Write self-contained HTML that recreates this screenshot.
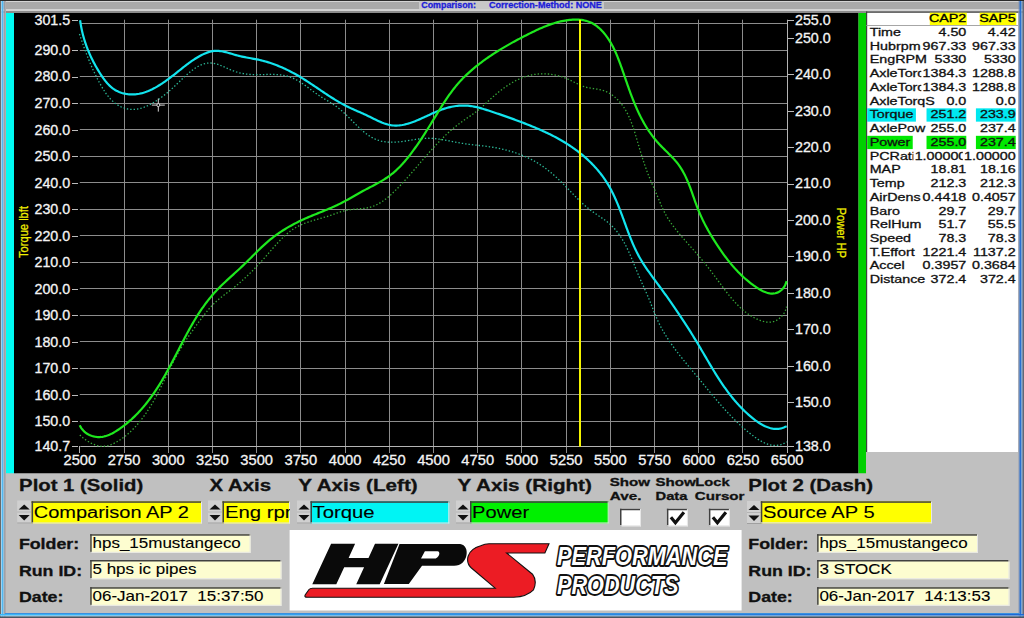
<!DOCTYPE html><html><head><meta charset="utf-8"><style>html,body{margin:0;padding:0;background:#c0c0c0;overflow:hidden}svg{display:block;font-family:"Liberation Sans",sans-serif}</style></head><body>
<svg width="1024" height="618" viewBox="0 0 1024 618">
<rect x="0" y="0" width="1024" height="618" fill="#c0c0c0"/>
<rect x="0" y="0" width="1024" height="1" fill="#2a2a2a"/>
<rect x="0" y="1" width="1024" height="1" fill="#d4d4d4"/>
<rect x="0" y="2" width="1024" height="7" fill="#a9a9a9"/>
<rect x="0" y="9" width="1024" height="2" fill="#d2d2d2"/>
<rect x="0" y="11" width="1024" height="2" fill="#8c8c8c"/>
<rect x="419" y="1" width="185" height="8" fill="#c8c8c8"/>
<text transform="translate(421.30,7.90) scale(0.9856,1)" font-size="9" font-weight="bold" fill="#1c1cd8" stroke="#1c1cd8" stroke-width="0.3" text-anchor="start">Comparison:</text>
<text transform="translate(489.00,7.90) scale(1.0090,1)" font-size="9" font-weight="bold" fill="#1c1cd8" stroke="#1c1cd8" stroke-width="0.3" text-anchor="start">Correction-Method: NONE</text>
<defs><linearGradient id="bb" x1="0" x2="1" y1="0" y2="0"><stop offset="0" stop-color="#3cb8f8"/><stop offset="1" stop-color="#1e68d4"/></linearGradient><linearGradient id="bl" x1="0" x2="1" y1="0" y2="0"><stop offset="0" stop-color="#8cd8ff"/><stop offset="1" stop-color="#6aa8e8"/></linearGradient></defs>
<rect x="0" y="0" width="1" height="618" fill="#6a6a6a"/>
<rect x="1" y="0" width="0.8" height="618" fill="#a8e0ff"/>
<rect x="1.8" y="0" width="1.4" height="618" fill="#50b8f2"/>
<rect x="3.2" y="0" width="0.6" height="618" fill="#98d4f4"/>
<rect x="3.8" y="0" width="1" height="618" fill="#8898a8"/>
<rect x="4.8" y="0" width="1.2" height="618" fill="#b4aaaa"/>
<rect x="1018.6" y="0" width="0.9" height="618" fill="#8090b0"/>
<rect x="1019.5" y="0" width="2" height="618" fill="#2a70d0"/>
<rect x="1021.5" y="0" width="1" height="618" fill="#80b0e0"/>
<rect x="1022.5" y="0" width="1.5" height="618" fill="#606878"/>
<rect x="5" y="613" width="1014" height="1" fill="#3a90e0"/>
<rect x="0" y="614" width="1024" height="1.5" fill="url(#bb)"/>
<rect x="0" y="615.5" width="1024" height="1" fill="url(#bl)"/>
<rect x="0" y="616.5" width="1024" height="1.5" fill="#4c5560"/>
<rect x="0" y="0" width="1024" height="1" fill="#2a2a2a"/>
<rect x="6" y="13" width="8" height="460.5" fill="#00fcf4"/>
<rect x="14" y="13" width="844.5" height="460.5" fill="#000"/>
<rect x="858.5" y="13" width="7.5" height="460.5" fill="#00d000"/>
<line x1="124.5" y1="19.7" x2="124.5" y2="453" stroke="#8c8c8c" stroke-width="1"/>
<line x1="168.5" y1="19.7" x2="168.5" y2="453" stroke="#8c8c8c" stroke-width="1"/>
<line x1="212.5" y1="19.7" x2="212.5" y2="453" stroke="#8c8c8c" stroke-width="1"/>
<line x1="256.5" y1="19.7" x2="256.5" y2="453" stroke="#8c8c8c" stroke-width="1"/>
<line x1="300.5" y1="19.7" x2="300.5" y2="453" stroke="#8c8c8c" stroke-width="1"/>
<line x1="345.5" y1="19.7" x2="345.5" y2="453" stroke="#8c8c8c" stroke-width="1"/>
<line x1="389.5" y1="19.7" x2="389.5" y2="453" stroke="#8c8c8c" stroke-width="1"/>
<line x1="433.5" y1="19.7" x2="433.5" y2="453" stroke="#8c8c8c" stroke-width="1"/>
<line x1="477.5" y1="19.7" x2="477.5" y2="453" stroke="#8c8c8c" stroke-width="1"/>
<line x1="521.5" y1="19.7" x2="521.5" y2="453" stroke="#8c8c8c" stroke-width="1"/>
<line x1="566.5" y1="19.7" x2="566.5" y2="453" stroke="#8c8c8c" stroke-width="1"/>
<line x1="610.5" y1="19.7" x2="610.5" y2="453" stroke="#8c8c8c" stroke-width="1"/>
<line x1="654.5" y1="19.7" x2="654.5" y2="453" stroke="#8c8c8c" stroke-width="1"/>
<line x1="698.5" y1="19.7" x2="698.5" y2="453" stroke="#8c8c8c" stroke-width="1"/>
<line x1="742.5" y1="19.7" x2="742.5" y2="453" stroke="#8c8c8c" stroke-width="1"/>
<line x1="79.8" y1="421.5" x2="787.2" y2="421.5" stroke="#8c8c8c" stroke-width="1"/>
<line x1="79.8" y1="394.5" x2="787.2" y2="394.5" stroke="#8c8c8c" stroke-width="1"/>
<line x1="79.8" y1="368.5" x2="787.2" y2="368.5" stroke="#8c8c8c" stroke-width="1"/>
<line x1="79.8" y1="341.5" x2="787.2" y2="341.5" stroke="#8c8c8c" stroke-width="1"/>
<line x1="79.8" y1="315.5" x2="787.2" y2="315.5" stroke="#8c8c8c" stroke-width="1"/>
<line x1="79.8" y1="288.5" x2="787.2" y2="288.5" stroke="#8c8c8c" stroke-width="1"/>
<line x1="79.8" y1="262.5" x2="787.2" y2="262.5" stroke="#8c8c8c" stroke-width="1"/>
<line x1="79.8" y1="235.5" x2="787.2" y2="235.5" stroke="#8c8c8c" stroke-width="1"/>
<line x1="79.8" y1="209.5" x2="787.2" y2="209.5" stroke="#8c8c8c" stroke-width="1"/>
<line x1="79.8" y1="182.5" x2="787.2" y2="182.5" stroke="#8c8c8c" stroke-width="1"/>
<line x1="79.8" y1="156.5" x2="787.2" y2="156.5" stroke="#8c8c8c" stroke-width="1"/>
<line x1="79.8" y1="129.5" x2="787.2" y2="129.5" stroke="#8c8c8c" stroke-width="1"/>
<line x1="79.8" y1="103.5" x2="787.2" y2="103.5" stroke="#8c8c8c" stroke-width="1"/>
<line x1="79.8" y1="76.5" x2="787.2" y2="76.5" stroke="#8c8c8c" stroke-width="1"/>
<line x1="79.8" y1="50.5" x2="787.2" y2="50.5" stroke="#8c8c8c" stroke-width="1"/>
<line x1="79.8" y1="23.5" x2="787.2" y2="23.5" stroke="#8c8c8c" stroke-width="1"/>
<line x1="80.3" y1="446.5" x2="787.2" y2="446.5" stroke="#b4b4b4" stroke-width="1"/>
<line x1="79.5" y1="446" x2="79.5" y2="453" stroke="#b4b4b4" stroke-width="1"/>
<line x1="787.5" y1="19.7" x2="787.5" y2="453" stroke="#b4b4b4" stroke-width="1"/>
<line x1="72" y1="20.5" x2="78" y2="20.5" stroke="#bbbbbb" stroke-width="1"/>
<text transform="translate(70.20,24.50) scale(1.0200,1)" font-size="14" fill="#f4f4f4" stroke="#f4f4f4" stroke-width="0.3" text-anchor="end">301.5</text>
<line x1="72" y1="50.5" x2="78" y2="50.5" stroke="#bbbbbb" stroke-width="1"/>
<text transform="translate(70.20,54.98) scale(1.0200,1)" font-size="14" fill="#f4f4f4" stroke="#f4f4f4" stroke-width="0.3" text-anchor="end">290.0</text>
<line x1="72" y1="77.5" x2="78" y2="77.5" stroke="#bbbbbb" stroke-width="1"/>
<text transform="translate(70.20,81.49) scale(1.0200,1)" font-size="14" fill="#f4f4f4" stroke="#f4f4f4" stroke-width="0.3" text-anchor="end">280.0</text>
<line x1="72" y1="103.5" x2="78" y2="103.5" stroke="#bbbbbb" stroke-width="1"/>
<text transform="translate(70.20,107.99) scale(1.0200,1)" font-size="14" fill="#f4f4f4" stroke="#f4f4f4" stroke-width="0.3" text-anchor="end">270.0</text>
<line x1="72" y1="130.5" x2="78" y2="130.5" stroke="#bbbbbb" stroke-width="1"/>
<text transform="translate(70.20,134.50) scale(1.0200,1)" font-size="14" fill="#f4f4f4" stroke="#f4f4f4" stroke-width="0.3" text-anchor="end">260.0</text>
<line x1="72" y1="156.5" x2="78" y2="156.5" stroke="#bbbbbb" stroke-width="1"/>
<text transform="translate(70.20,161.00) scale(1.0200,1)" font-size="14" fill="#f4f4f4" stroke="#f4f4f4" stroke-width="0.3" text-anchor="end">250.0</text>
<line x1="72" y1="183.5" x2="78" y2="183.5" stroke="#bbbbbb" stroke-width="1"/>
<text transform="translate(70.20,187.51) scale(1.0200,1)" font-size="14" fill="#f4f4f4" stroke="#f4f4f4" stroke-width="0.3" text-anchor="end">240.0</text>
<line x1="72" y1="209.5" x2="78" y2="209.5" stroke="#bbbbbb" stroke-width="1"/>
<text transform="translate(70.20,214.01) scale(1.0200,1)" font-size="14" fill="#f4f4f4" stroke="#f4f4f4" stroke-width="0.3" text-anchor="end">230.0</text>
<line x1="72" y1="236.5" x2="78" y2="236.5" stroke="#bbbbbb" stroke-width="1"/>
<text transform="translate(70.20,240.52) scale(1.0200,1)" font-size="14" fill="#f4f4f4" stroke="#f4f4f4" stroke-width="0.3" text-anchor="end">220.0</text>
<line x1="72" y1="262.5" x2="78" y2="262.5" stroke="#bbbbbb" stroke-width="1"/>
<text transform="translate(70.20,267.02) scale(1.0200,1)" font-size="14" fill="#f4f4f4" stroke="#f4f4f4" stroke-width="0.3" text-anchor="end">210.0</text>
<line x1="72" y1="289.5" x2="78" y2="289.5" stroke="#bbbbbb" stroke-width="1"/>
<text transform="translate(70.20,293.53) scale(1.0200,1)" font-size="14" fill="#f4f4f4" stroke="#f4f4f4" stroke-width="0.3" text-anchor="end">200.0</text>
<line x1="72" y1="315.5" x2="78" y2="315.5" stroke="#bbbbbb" stroke-width="1"/>
<text transform="translate(70.20,320.03) scale(1.0200,1)" font-size="14" fill="#f4f4f4" stroke="#f4f4f4" stroke-width="0.3" text-anchor="end">190.0</text>
<line x1="72" y1="342.5" x2="78" y2="342.5" stroke="#bbbbbb" stroke-width="1"/>
<text transform="translate(70.20,346.54) scale(1.0200,1)" font-size="14" fill="#f4f4f4" stroke="#f4f4f4" stroke-width="0.3" text-anchor="end">180.0</text>
<line x1="72" y1="368.5" x2="78" y2="368.5" stroke="#bbbbbb" stroke-width="1"/>
<text transform="translate(70.20,373.04) scale(1.0200,1)" font-size="14" fill="#f4f4f4" stroke="#f4f4f4" stroke-width="0.3" text-anchor="end">170.0</text>
<line x1="72" y1="395.5" x2="78" y2="395.5" stroke="#bbbbbb" stroke-width="1"/>
<text transform="translate(70.20,399.55) scale(1.0200,1)" font-size="14" fill="#f4f4f4" stroke="#f4f4f4" stroke-width="0.3" text-anchor="end">160.0</text>
<line x1="72" y1="421.5" x2="78" y2="421.5" stroke="#bbbbbb" stroke-width="1"/>
<text transform="translate(70.20,426.05) scale(1.0200,1)" font-size="14" fill="#f4f4f4" stroke="#f4f4f4" stroke-width="0.3" text-anchor="end">150.0</text>
<line x1="72" y1="446.5" x2="78" y2="446.5" stroke="#bbbbbb" stroke-width="1"/>
<text transform="translate(70.20,450.70) scale(1.0200,1)" font-size="14" fill="#f4f4f4" stroke="#f4f4f4" stroke-width="0.3" text-anchor="end">140.7</text>
<line x1="788" y1="20.5" x2="794" y2="20.5" stroke="#bbbbbb" stroke-width="1"/>
<text transform="translate(795.00,24.50) scale(1.0200,1)" font-size="14" fill="#f4f4f4" stroke="#f4f4f4" stroke-width="0.3" text-anchor="start">255.0</text>
<line x1="788" y1="38.5" x2="794" y2="38.5" stroke="#bbbbbb" stroke-width="1"/>
<text transform="translate(795.00,42.71) scale(1.0200,1)" font-size="14" fill="#f4f4f4" stroke="#f4f4f4" stroke-width="0.3" text-anchor="start">250.0</text>
<line x1="788" y1="74.5" x2="794" y2="74.5" stroke="#bbbbbb" stroke-width="1"/>
<text transform="translate(795.00,79.14) scale(1.0200,1)" font-size="14" fill="#f4f4f4" stroke="#f4f4f4" stroke-width="0.3" text-anchor="start">240.0</text>
<line x1="788" y1="111.5" x2="794" y2="111.5" stroke="#bbbbbb" stroke-width="1"/>
<text transform="translate(795.00,115.57) scale(1.0200,1)" font-size="14" fill="#f4f4f4" stroke="#f4f4f4" stroke-width="0.3" text-anchor="start">230.0</text>
<line x1="788" y1="147.5" x2="794" y2="147.5" stroke="#bbbbbb" stroke-width="1"/>
<text transform="translate(795.00,152.00) scale(1.0200,1)" font-size="14" fill="#f4f4f4" stroke="#f4f4f4" stroke-width="0.3" text-anchor="start">220.0</text>
<line x1="788" y1="184.5" x2="794" y2="184.5" stroke="#bbbbbb" stroke-width="1"/>
<text transform="translate(795.00,188.42) scale(1.0200,1)" font-size="14" fill="#f4f4f4" stroke="#f4f4f4" stroke-width="0.3" text-anchor="start">210.0</text>
<line x1="788" y1="220.5" x2="794" y2="220.5" stroke="#bbbbbb" stroke-width="1"/>
<text transform="translate(795.00,224.85) scale(1.0200,1)" font-size="14" fill="#f4f4f4" stroke="#f4f4f4" stroke-width="0.3" text-anchor="start">200.0</text>
<line x1="788" y1="256.5" x2="794" y2="256.5" stroke="#bbbbbb" stroke-width="1"/>
<text transform="translate(795.00,261.28) scale(1.0200,1)" font-size="14" fill="#f4f4f4" stroke="#f4f4f4" stroke-width="0.3" text-anchor="start">190.0</text>
<line x1="788" y1="293.5" x2="794" y2="293.5" stroke="#bbbbbb" stroke-width="1"/>
<text transform="translate(795.00,297.71) scale(1.0200,1)" font-size="14" fill="#f4f4f4" stroke="#f4f4f4" stroke-width="0.3" text-anchor="start">180.0</text>
<line x1="788" y1="329.5" x2="794" y2="329.5" stroke="#bbbbbb" stroke-width="1"/>
<text transform="translate(795.00,334.13) scale(1.0200,1)" font-size="14" fill="#f4f4f4" stroke="#f4f4f4" stroke-width="0.3" text-anchor="start">170.0</text>
<line x1="788" y1="366.5" x2="794" y2="366.5" stroke="#bbbbbb" stroke-width="1"/>
<text transform="translate(795.00,370.56) scale(1.0200,1)" font-size="14" fill="#f4f4f4" stroke="#f4f4f4" stroke-width="0.3" text-anchor="start">160.0</text>
<line x1="788" y1="402.5" x2="794" y2="402.5" stroke="#bbbbbb" stroke-width="1"/>
<text transform="translate(795.00,406.99) scale(1.0200,1)" font-size="14" fill="#f4f4f4" stroke="#f4f4f4" stroke-width="0.3" text-anchor="start">150.0</text>
<line x1="788" y1="446.5" x2="794" y2="446.5" stroke="#bbbbbb" stroke-width="1"/>
<text transform="translate(795.00,450.70) scale(1.0200,1)" font-size="14" fill="#f4f4f4" stroke="#f4f4f4" stroke-width="0.3" text-anchor="start">138.0</text>
<text transform="translate(79.80,464.70) scale(1.0500,1)" font-size="14" fill="#f4f4f4" stroke="#f4f4f4" stroke-width="0.3" text-anchor="middle">2500</text>
<text transform="translate(124.01,464.70) scale(1.0500,1)" font-size="14" fill="#f4f4f4" stroke="#f4f4f4" stroke-width="0.3" text-anchor="middle">2750</text>
<text transform="translate(168.23,464.70) scale(1.0500,1)" font-size="14" fill="#f4f4f4" stroke="#f4f4f4" stroke-width="0.3" text-anchor="middle">3000</text>
<text transform="translate(212.44,464.70) scale(1.0500,1)" font-size="14" fill="#f4f4f4" stroke="#f4f4f4" stroke-width="0.3" text-anchor="middle">3250</text>
<text transform="translate(256.65,464.70) scale(1.0500,1)" font-size="14" fill="#f4f4f4" stroke="#f4f4f4" stroke-width="0.3" text-anchor="middle">3500</text>
<text transform="translate(300.86,464.70) scale(1.0500,1)" font-size="14" fill="#f4f4f4" stroke="#f4f4f4" stroke-width="0.3" text-anchor="middle">3750</text>
<text transform="translate(345.08,464.70) scale(1.0500,1)" font-size="14" fill="#f4f4f4" stroke="#f4f4f4" stroke-width="0.3" text-anchor="middle">4000</text>
<text transform="translate(389.29,464.70) scale(1.0500,1)" font-size="14" fill="#f4f4f4" stroke="#f4f4f4" stroke-width="0.3" text-anchor="middle">4250</text>
<text transform="translate(433.50,464.70) scale(1.0500,1)" font-size="14" fill="#f4f4f4" stroke="#f4f4f4" stroke-width="0.3" text-anchor="middle">4500</text>
<text transform="translate(477.71,464.70) scale(1.0500,1)" font-size="14" fill="#f4f4f4" stroke="#f4f4f4" stroke-width="0.3" text-anchor="middle">4750</text>
<text transform="translate(521.93,464.70) scale(1.0500,1)" font-size="14" fill="#f4f4f4" stroke="#f4f4f4" stroke-width="0.3" text-anchor="middle">5000</text>
<text transform="translate(566.14,464.70) scale(1.0500,1)" font-size="14" fill="#f4f4f4" stroke="#f4f4f4" stroke-width="0.3" text-anchor="middle">5250</text>
<text transform="translate(610.35,464.70) scale(1.0500,1)" font-size="14" fill="#f4f4f4" stroke="#f4f4f4" stroke-width="0.3" text-anchor="middle">5500</text>
<text transform="translate(654.56,464.70) scale(1.0500,1)" font-size="14" fill="#f4f4f4" stroke="#f4f4f4" stroke-width="0.3" text-anchor="middle">5750</text>
<text transform="translate(698.78,464.70) scale(1.0500,1)" font-size="14" fill="#f4f4f4" stroke="#f4f4f4" stroke-width="0.3" text-anchor="middle">6000</text>
<text transform="translate(742.99,464.70) scale(1.0500,1)" font-size="14" fill="#f4f4f4" stroke="#f4f4f4" stroke-width="0.3" text-anchor="middle">6250</text>
<text transform="translate(787.20,464.70) scale(1.0500,1)" font-size="14" fill="#f4f4f4" stroke="#f4f4f4" stroke-width="0.3" text-anchor="middle">6500</text>
<text transform="translate(28.2,258) rotate(-90)" font-size="12.5" fill="#eeee00" stroke="#eeee00" stroke-width="0.25" textLength="52" lengthAdjust="spacingAndGlyphs">Torque lbft</text>
<text transform="translate(837.4,207.5) rotate(90)" font-size="12.5" fill="#eeee00" stroke="#eeee00" stroke-width="0.25" textLength="50.5" lengthAdjust="spacingAndGlyphs">Power HP</text>
<path d="M79.45,34.01 L79.94,35.48 L80.43,36.93 L80.93,38.38 L81.42,39.83 L81.91,41.27 L82.41,42.70 L82.91,44.13 L83.41,45.55 L83.91,46.96 L84.42,48.37 L84.93,49.78 L85.44,51.18 L85.96,52.58 L86.49,53.97 L87.02,55.36 L87.55,56.74 L88.09,58.12 L88.64,59.50 L89.20,60.87 L89.76,62.24 L90.33,63.60 L90.91,64.97 L91.50,66.33 L92.09,67.69 L92.70,69.04 L93.31,70.39 L93.94,71.75 L94.57,73.10 L95.22,74.44 L95.88,75.79 L96.55,77.14 L97.23,78.48 L97.93,79.82 L98.63,81.17 L99.36,82.51 L100.09,83.85 L100.84,85.19 L101.61,86.53 L102.39,87.86 L103.19,89.18 L104.01,90.48 L104.86,91.77 L105.73,93.04 L106.62,94.29 L107.53,95.51 L108.48,96.70 L109.45,97.85 L110.46,98.97 L111.50,100.05 L112.57,101.09 L113.67,102.08 L114.81,103.02 L115.99,103.90 L117.21,104.73 L118.47,105.50 L119.78,106.21 L121.11,106.85 L122.48,107.43 L123.88,107.94 L125.30,108.37 L126.74,108.73 L128.19,109.02 L129.65,109.23 L131.12,109.36 L132.59,109.40 L134.06,109.37 L135.53,109.26 L136.99,109.07 L138.44,108.81 L139.90,108.49 L141.34,108.10 L142.78,107.66 L144.20,107.15 L145.62,106.60 L147.03,106.00 L148.42,105.36 L149.80,104.67 L151.17,103.95 L152.52,103.20 L153.85,102.42 L155.17,101.61 L156.47,100.78 L157.75,99.93 L159.01,99.07 L160.25,98.20 L161.47,97.31 L162.67,96.41 L163.85,95.50 L165.02,94.58 L166.18,93.65 L167.32,92.70 L168.45,91.75 L169.57,90.79 L170.68,89.81 L171.78,88.83 L172.88,87.84 L173.96,86.83 L175.05,85.82 L176.12,84.80 L177.20,83.77 L178.27,82.74 L179.34,81.70 L180.42,80.65 L181.50,79.61 L182.59,78.56 L183.69,77.52 L184.80,76.48 L185.92,75.45 L187.06,74.43 L188.23,73.42 L189.41,72.42 L190.62,71.45 L191.85,70.49 L193.11,69.57 L194.39,68.67 L195.68,67.82 L197.00,67.02 L198.33,66.27 L199.68,65.58 L201.04,64.95 L202.41,64.40 L203.79,63.93 L205.18,63.55 L206.58,63.26 L207.98,63.06 L209.39,62.98 L210.80,63.00 L212.21,63.12 L213.62,63.34 L215.04,63.63 L216.46,64.01 L217.88,64.45 L219.30,64.94 L220.72,65.48 L222.14,66.06 L223.56,66.67 L224.99,67.30 L226.41,67.94 L227.83,68.58 L229.26,69.21 L230.69,69.83 L232.11,70.42 L233.53,70.98 L234.96,71.49 L236.38,71.96 L237.81,72.38 L239.24,72.76 L240.66,73.10 L242.10,73.41 L243.53,73.67 L244.97,73.90 L246.42,74.10 L247.87,74.26 L249.32,74.39 L250.79,74.50 L252.26,74.57 L253.74,74.63 L255.22,74.65 L256.72,74.66 L258.22,74.66 L259.73,74.64 L261.24,74.61 L262.75,74.57 L264.27,74.54 L265.79,74.50 L267.31,74.47 L268.82,74.44 L270.34,74.43 L271.85,74.43 L273.36,74.45 L274.87,74.49 L276.37,74.55 L277.86,74.65 L279.34,74.77 L280.82,74.93 L282.28,75.13 L283.74,75.37 L285.18,75.65 L286.61,75.98 L288.03,76.37 L289.43,76.81 L290.81,77.30 L292.18,77.85 L293.54,78.45 L294.89,79.10 L296.22,79.79 L297.54,80.53 L298.84,81.29 L300.14,82.09 L301.43,82.92 L302.71,83.77 L303.99,84.65 L305.26,85.54 L306.52,86.45 L307.77,87.36 L309.03,88.28 L310.27,89.21 L311.52,90.13 L312.77,91.06 L314.01,91.97 L315.25,92.87 L316.50,93.75 L317.74,94.62 L318.99,95.46 L320.24,96.28 L321.49,97.08 L322.75,97.87 L324.00,98.64 L325.25,99.40 L326.50,100.15 L327.75,100.91 L328.99,101.66 L330.23,102.43 L331.46,103.20 L332.68,103.98 L333.90,104.78 L335.11,105.60 L336.31,106.45 L337.49,107.32 L338.67,108.23 L339.83,109.16 L340.99,110.13 L342.13,111.13 L343.27,112.14 L344.39,113.18 L345.51,114.24 L346.63,115.31 L347.74,116.40 L348.85,117.50 L349.95,118.60 L351.06,119.71 L352.16,120.82 L353.26,121.93 L354.37,123.04 L355.47,124.14 L356.58,125.23 L357.70,126.31 L358.82,127.38 L359.95,128.43 L361.08,129.46 L362.23,130.47 L363.38,131.45 L364.55,132.41 L365.72,133.33 L366.91,134.22 L368.12,135.07 L369.34,135.89 L370.57,136.66 L371.82,137.39 L373.09,138.08 L374.38,138.71 L375.68,139.29 L377.01,139.82 L378.36,140.28 L379.73,140.69 L381.13,141.05 L382.54,141.35 L383.96,141.60 L385.41,141.81 L386.86,141.97 L388.33,142.08 L389.81,142.16 L391.31,142.19 L392.81,142.19 L394.31,142.16 L395.83,142.09 L397.34,141.99 L398.86,141.87 L400.38,141.72 L401.90,141.55 L403.42,141.36 L404.94,141.15 L406.45,140.93 L407.96,140.69 L409.46,140.45 L410.96,140.20 L412.45,139.95 L413.94,139.70 L415.43,139.46 L416.91,139.23 L418.39,139.01 L419.87,138.82 L421.35,138.64 L422.83,138.50 L424.31,138.38 L425.79,138.31 L427.26,138.27 L428.74,138.27 L430.22,138.30 L431.71,138.37 L433.19,138.47 L434.67,138.60 L436.16,138.75 L437.64,138.93 L439.13,139.14 L440.61,139.36 L442.10,139.60 L443.59,139.85 L445.07,140.12 L446.56,140.40 L448.05,140.68 L449.54,140.97 L451.03,141.27 L452.52,141.57 L454.01,141.86 L455.50,142.15 L456.99,142.44 L458.48,142.72 L459.97,142.98 L461.46,143.24 L462.95,143.48 L464.44,143.71 L465.93,143.92 L467.42,144.12 L468.91,144.31 L470.40,144.49 L471.89,144.66 L473.38,144.83 L474.87,145.00 L476.36,145.16 L477.85,145.32 L479.34,145.48 L480.82,145.65 L482.31,145.82 L483.80,145.99 L485.29,146.17 L486.77,146.36 L488.26,146.57 L489.74,146.78 L491.23,147.00 L492.71,147.24 L494.19,147.49 L495.67,147.76 L497.15,148.04 L498.63,148.33 L500.10,148.63 L501.58,148.96 L503.04,149.29 L504.51,149.64 L505.97,150.01 L507.42,150.39 L508.88,150.78 L510.32,151.20 L511.76,151.62 L513.20,152.07 L514.63,152.53 L516.06,153.00 L517.47,153.50 L518.88,154.01 L520.29,154.54 L521.69,155.08 L523.08,155.65 L524.46,156.23 L525.83,156.83 L527.19,157.45 L528.55,158.08 L529.90,158.74 L531.23,159.42 L532.56,160.11 L533.88,160.82 L535.18,161.56 L536.48,162.31 L537.76,163.09 L539.04,163.88 L540.30,164.70 L541.55,165.53 L542.79,166.38 L544.02,167.25 L545.23,168.14 L546.44,169.05 L547.64,169.97 L548.82,170.90 L550.00,171.85 L551.16,172.81 L552.32,173.79 L553.47,174.77 L554.61,175.77 L555.73,176.78 L556.85,177.80 L557.96,178.83 L559.06,179.87 L560.15,180.91 L561.24,181.96 L562.31,183.02 L563.38,184.09 L564.44,185.15 L565.49,186.23 L566.54,187.30 L567.58,188.38 L568.62,189.46 L569.65,190.54 L570.69,191.62 L571.72,192.70 L572.75,193.77 L573.79,194.84 L574.83,195.91 L575.87,196.98 L576.91,198.03 L577.96,199.08 L579.02,200.13 L580.09,201.16 L581.16,202.19 L582.25,203.20 L583.35,204.20 L584.46,205.20 L585.58,206.17 L586.71,207.14 L587.87,208.09 L589.03,209.02 L590.22,209.94 L591.42,210.84 L592.65,211.72 L593.88,212.59 L595.13,213.44 L596.39,214.29 L597.65,215.14 L598.91,215.98 L600.18,216.82 L601.43,217.67 L602.68,218.53 L603.92,219.39 L605.14,220.27 L606.34,221.17 L607.52,222.08 L608.68,223.02 L609.81,223.98 L610.90,224.97 L611.97,225.99 L613.00,227.03 L614.01,228.10 L614.99,229.20 L615.94,230.32 L616.87,231.46 L617.77,232.63 L618.65,233.81 L619.50,235.02 L620.34,236.25 L621.15,237.49 L621.94,238.75 L622.71,240.03 L623.46,241.33 L624.19,242.63 L624.91,243.96 L625.61,245.29 L626.30,246.64 L626.97,248.00 L627.63,249.37 L628.28,250.75 L628.91,252.14 L629.54,253.53 L630.16,254.93 L630.77,256.34 L631.37,257.75 L631.96,259.16 L632.55,260.58 L633.13,262.00 L633.71,263.42 L634.29,264.85 L634.87,266.27 L635.44,267.68 L636.01,269.10 L636.59,270.51 L637.17,271.92 L637.74,273.33 L638.33,274.72 L638.92,276.11 L639.51,277.49 L640.11,278.87 L640.71,280.23 L641.31,281.60 L641.92,282.95 L642.53,284.30 L643.14,285.65 L643.75,287.00 L644.36,288.35 L644.97,289.70 L645.58,291.04 L646.18,292.39 L646.77,293.75 L647.36,295.10 L647.95,296.47 L648.52,297.83 L649.09,299.21 L649.65,300.59 L650.21,301.97 L650.76,303.37 L651.31,304.76 L651.86,306.16 L652.40,307.55 L652.95,308.95 L653.50,310.35 L654.06,311.75 L654.62,313.15 L655.18,314.54 L655.76,315.93 L656.34,317.32 L656.94,318.70 L657.55,320.08 L658.17,321.44 L658.80,322.80 L659.46,324.15 L660.13,325.50 L660.81,326.83 L661.51,328.15 L662.23,329.47 L662.96,330.78 L663.70,332.08 L664.46,333.37 L665.23,334.66 L666.02,335.94 L666.81,337.21 L667.62,338.47 L668.44,339.73 L669.28,340.98 L670.12,342.23 L670.97,343.47 L671.83,344.70 L672.71,345.93 L673.59,347.15 L674.48,348.37 L675.37,349.58 L676.28,350.79 L677.19,351.99 L678.11,353.19 L679.03,354.39 L679.96,355.58 L680.90,356.77 L681.84,357.95 L682.78,359.13 L683.73,360.31 L684.69,361.48 L685.64,362.66 L686.60,363.83 L687.56,365.00 L688.52,366.16 L689.49,367.33 L690.45,368.49 L691.42,369.65 L692.38,370.81 L693.35,371.97 L694.31,373.13 L695.27,374.29 L696.23,375.44 L697.19,376.60 L698.15,377.76 L699.10,378.92 L700.05,380.08 L701.00,381.23 L701.95,382.39 L702.89,383.55 L703.84,384.70 L704.78,385.86 L705.73,387.01 L706.67,388.17 L707.62,389.32 L708.56,390.47 L709.51,391.62 L710.45,392.76 L711.40,393.91 L712.35,395.05 L713.30,396.19 L714.26,397.33 L715.21,398.47 L716.17,399.60 L717.14,400.74 L718.10,401.86 L719.07,402.99 L720.05,404.11 L721.03,405.23 L722.01,406.35 L723.00,407.46 L723.99,408.57 L724.99,409.67 L726.00,410.77 L727.01,411.87 L728.03,412.96 L729.06,414.05 L730.09,415.13 L731.13,416.21 L732.18,417.28 L733.24,418.35 L734.30,419.41 L735.38,420.47 L736.46,421.52 L737.55,422.57 L738.66,423.61 L739.77,424.64 L740.89,425.67 L742.02,426.69 L743.17,427.71 L744.32,428.72 L745.49,429.72 L746.67,430.72 L747.86,431.71 L749.07,432.69 L750.28,433.66 L751.51,434.63 L752.75,435.58 L754.01,436.52 L755.28,437.43 L756.55,438.32 L757.84,439.18 L759.14,440.01 L760.45,440.79 L761.77,441.53 L763.10,442.22 L764.44,442.85 L765.79,443.43 L767.15,443.94 L768.51,444.39 L769.89,444.76 L771.27,445.06 L772.65,445.27 L774.05,445.40 L775.45,445.43 L776.85,445.37 L778.27,445.21 L779.68,444.95 L781.10,444.57 L782.53,444.08 L783.96,443.47 L785.39,442.74 L786.83,441.87" fill="none" stroke="#2cb898" stroke-width="1.3" stroke-dasharray="1.4 2"/>
<path d="M79.80,434.98 L80.74,435.85 L81.76,436.76 L82.86,437.68 L84.04,438.60 L85.27,439.52 L86.57,440.43 L87.91,441.31 L89.30,442.15 L90.73,442.95 L92.18,443.69 L93.66,444.35 L95.15,444.94 L96.65,445.44 L98.15,445.83 L99.65,446.12 L101.13,446.28 L102.61,446.33 L104.06,446.27 L105.51,446.10 L106.94,445.85 L108.35,445.51 L109.75,445.08 L111.13,444.59 L112.50,444.03 L113.85,443.41 L115.18,442.73 L116.49,442.02 L117.78,441.27 L119.06,440.49 L120.31,439.68 L121.55,438.85 L122.77,437.99 L123.97,437.11 L125.15,436.20 L126.31,435.28 L127.46,434.33 L128.59,433.36 L129.70,432.37 L130.79,431.36 L131.87,430.33 L132.93,429.28 L133.98,428.21 L135.01,427.12 L136.02,426.02 L137.02,424.90 L138.00,423.76 L138.97,422.61 L139.93,421.45 L140.87,420.27 L141.79,419.07 L142.71,417.86 L143.61,416.64 L144.49,415.41 L145.36,414.17 L146.23,412.92 L147.07,411.65 L147.91,410.38 L148.74,409.10 L149.55,407.81 L150.35,406.51 L151.14,405.21 L151.92,403.90 L152.69,402.58 L153.45,401.26 L154.20,399.93 L154.94,398.60 L155.68,397.26 L156.40,395.93 L157.11,394.59 L157.82,393.25 L158.51,391.90 L159.20,390.56 L159.88,389.22 L160.56,387.87 L161.23,386.53 L161.89,385.18 L162.55,383.83 L163.21,382.49 L163.86,381.14 L164.52,379.80 L165.16,378.46 L165.81,377.11 L166.46,375.77 L167.11,374.43 L167.75,373.09 L168.40,371.75 L169.05,370.41 L169.70,369.08 L170.36,367.75 L171.02,366.42 L171.68,365.09 L172.35,363.76 L173.03,362.44 L173.71,361.12 L174.40,359.80 L175.09,358.49 L175.80,357.18 L176.51,355.87 L177.23,354.57 L177.96,353.27 L178.70,351.97 L179.46,350.68 L180.22,349.39 L180.99,348.11 L181.77,346.83 L182.56,345.55 L183.36,344.28 L184.16,343.01 L184.98,341.75 L185.80,340.48 L186.63,339.23 L187.46,337.97 L188.30,336.72 L189.15,335.47 L190.01,334.23 L190.87,332.99 L191.74,331.75 L192.61,330.52 L193.48,329.29 L194.36,328.06 L195.25,326.84 L196.14,325.62 L197.03,324.40 L197.93,323.18 L198.83,321.97 L199.73,320.76 L200.63,319.56 L201.54,318.36 L202.45,317.16 L203.36,315.96 L204.28,314.77 L205.20,313.58 L206.12,312.41 L207.06,311.24 L208.01,310.08 L208.97,308.94 L209.95,307.82 L210.94,306.70 L211.95,305.61 L212.99,304.54 L214.04,303.49 L215.12,302.46 L216.22,301.46 L217.34,300.47 L218.48,299.50 L219.64,298.55 L220.81,297.61 L221.99,296.68 L223.18,295.76 L224.38,294.84 L225.58,293.94 L226.79,293.03 L227.99,292.13 L229.20,291.22 L230.40,290.31 L231.59,289.39 L232.78,288.46 L233.96,287.53 L235.12,286.59 L236.28,285.64 L237.44,284.68 L238.58,283.71 L239.72,282.74 L240.84,281.75 L241.96,280.76 L243.08,279.77 L244.18,278.76 L245.28,277.75 L246.38,276.73 L247.46,275.70 L248.54,274.66 L249.62,273.62 L250.69,272.57 L251.75,271.52 L252.80,270.45 L253.85,269.38 L254.90,268.31 L255.94,267.23 L256.98,266.14 L258.01,265.04 L259.03,263.94 L260.06,262.83 L261.07,261.72 L262.09,260.60 L263.10,259.48 L264.11,258.34 L265.11,257.21 L266.11,256.07 L267.11,254.92 L268.10,253.77 L269.10,252.62 L270.09,251.47 L271.08,250.31 L272.08,249.16 L273.08,248.02 L274.08,246.88 L275.09,245.74 L276.10,244.61 L277.12,243.49 L278.15,242.39 L279.18,241.29 L280.22,240.21 L281.28,239.14 L282.34,238.09 L283.42,237.05 L284.50,236.04 L285.61,235.04 L286.72,234.07 L287.85,233.12 L289.00,232.20 L290.16,231.30 L291.34,230.43 L292.55,229.58 L293.77,228.77 L295.01,227.99 L296.27,227.24 L297.56,226.53 L298.87,225.85 L300.20,225.20 L301.55,224.59 L302.92,224.01 L304.31,223.45 L305.71,222.92 L307.13,222.41 L308.56,221.93 L310.01,221.45 L311.46,221.00 L312.92,220.56 L314.39,220.12 L315.86,219.70 L317.33,219.28 L318.81,218.87 L320.28,218.46 L321.76,218.04 L323.23,217.62 L324.70,217.20 L326.16,216.77 L327.61,216.32 L329.05,215.87 L330.48,215.39 L331.90,214.91 L333.31,214.41 L334.71,213.90 L336.11,213.40 L337.50,212.90 L338.90,212.42 L340.30,211.95 L341.71,211.51 L343.12,211.10 L344.55,210.72 L345.99,210.38 L347.44,210.09 L348.92,209.85 L350.40,209.64 L351.90,209.48 L353.41,209.33 L354.93,209.21 L356.45,209.09 L357.97,208.98 L359.48,208.87 L361.00,208.74 L362.50,208.59 L364.00,208.42 L365.48,208.21 L366.95,207.97 L368.40,207.67 L369.82,207.32 L371.23,206.91 L372.61,206.44 L373.98,205.92 L375.32,205.36 L376.65,204.74 L377.95,204.08 L379.24,203.37 L380.51,202.62 L381.76,201.83 L383.00,201.01 L384.22,200.15 L385.42,199.26 L386.61,198.34 L387.79,197.39 L388.95,196.41 L390.10,195.41 L391.24,194.40 L392.36,193.36 L393.48,192.30 L394.58,191.24 L395.67,190.16 L396.76,189.07 L397.83,187.97 L398.90,186.87 L399.95,185.76 L401.01,184.65 L402.05,183.54 L403.08,182.42 L404.11,181.30 L405.14,180.17 L406.16,179.04 L407.17,177.91 L408.18,176.78 L409.18,175.65 L410.18,174.51 L411.17,173.37 L412.16,172.23 L413.15,171.09 L414.13,169.94 L415.12,168.80 L416.10,167.66 L417.07,166.52 L418.05,165.37 L419.02,164.23 L420.00,163.09 L420.97,161.95 L421.95,160.81 L422.92,159.67 L423.90,158.54 L424.87,157.41 L425.85,156.28 L426.83,155.15 L427.81,154.02 L428.79,152.90 L429.78,151.79 L430.77,150.67 L431.76,149.56 L432.76,148.46 L433.76,147.36 L434.77,146.26 L435.78,145.17 L436.80,144.09 L437.82,143.01 L438.85,141.94 L439.88,140.87 L440.93,139.81 L441.97,138.76 L443.03,137.71 L444.10,136.67 L445.17,135.64 L446.25,134.62 L447.34,133.61 L448.44,132.60 L449.55,131.60 L450.67,130.62 L451.80,129.64 L452.94,128.67 L454.09,127.71 L455.26,126.76 L456.43,125.82 L457.62,124.90 L458.82,123.98 L460.03,123.08 L461.26,122.18 L462.49,121.30 L463.74,120.42 L464.99,119.55 L466.25,118.68 L467.50,117.82 L468.76,116.96 L470.01,116.10 L471.26,115.23 L472.50,114.36 L473.73,113.48 L474.95,112.60 L476.16,111.71 L477.35,110.80 L478.52,109.88 L479.67,108.95 L480.79,108.00 L481.90,107.03 L482.99,106.06 L484.07,105.07 L485.15,104.07 L486.22,103.07 L487.29,102.06 L488.37,101.05 L489.46,100.04 L490.56,99.03 L491.67,98.03 L492.79,97.02 L493.93,96.02 L495.08,95.03 L496.23,94.05 L497.41,93.07 L498.59,92.11 L499.78,91.16 L500.99,90.22 L502.21,89.29 L503.44,88.38 L504.68,87.48 L505.93,86.60 L507.19,85.74 L508.47,84.90 L509.75,84.08 L511.05,83.29 L512.36,82.52 L513.68,81.77 L515.01,81.05 L516.35,80.36 L517.70,79.69 L519.06,79.06 L520.43,78.46 L521.82,77.89 L523.21,77.35 L524.61,76.85 L526.03,76.38 L527.45,75.95 L528.89,75.57 L530.33,75.22 L531.78,74.90 L533.24,74.63 L534.71,74.40 L536.19,74.20 L537.67,74.05 L539.15,73.93 L540.64,73.85 L542.12,73.81 L543.61,73.80 L545.11,73.83 L546.60,73.90 L548.09,74.01 L549.58,74.15 L551.06,74.33 L552.54,74.55 L554.02,74.81 L555.49,75.09 L556.95,75.42 L558.41,75.78 L559.86,76.18 L561.30,76.61 L562.73,77.08 L564.14,77.59 L565.55,78.13 L566.94,78.70 L568.32,79.31 L569.69,79.94 L571.05,80.60 L572.40,81.28 L573.75,81.96 L575.10,82.64 L576.45,83.32 L577.80,83.98 L579.16,84.62 L580.53,85.23 L581.92,85.81 L583.32,86.34 L584.73,86.83 L586.17,87.25 L587.63,87.61 L589.12,87.92 L590.61,88.18 L592.12,88.41 L593.64,88.62 L595.15,88.83 L596.67,89.05 L598.17,89.29 L599.66,89.56 L601.13,89.89 L602.58,90.28 L604.00,90.74 L605.39,91.27 L606.75,91.86 L608.09,92.52 L609.39,93.23 L610.66,94.01 L611.91,94.84 L613.12,95.72 L614.30,96.65 L615.45,97.62 L616.56,98.63 L617.64,99.69 L618.69,100.78 L619.70,101.91 L620.68,103.06 L621.62,104.25 L622.53,105.45 L623.39,106.68 L624.23,107.93 L625.03,109.20 L625.79,110.49 L626.53,111.80 L627.23,113.12 L627.91,114.45 L628.56,115.80 L629.18,117.17 L629.78,118.54 L630.36,119.93 L630.92,121.33 L631.46,122.73 L631.98,124.15 L632.49,125.57 L632.98,127.00 L633.46,128.44 L633.93,129.88 L634.39,131.32 L634.84,132.76 L635.28,134.21 L635.72,135.66 L636.15,137.11 L636.58,138.55 L637.01,140.00 L637.44,141.44 L637.87,142.88 L638.30,144.33 L638.72,145.77 L639.15,147.21 L639.58,148.64 L640.01,150.08 L640.44,151.52 L640.88,152.95 L641.32,154.38 L641.76,155.81 L642.21,157.24 L642.66,158.67 L643.12,160.09 L643.58,161.51 L644.05,162.93 L644.52,164.35 L645.01,165.77 L645.50,167.18 L646.00,168.59 L646.51,170.00 L647.02,171.41 L647.55,172.81 L648.09,174.21 L648.64,175.61 L649.20,177.01 L649.77,178.40 L650.36,179.79 L650.94,181.18 L651.54,182.57 L652.14,183.95 L652.75,185.34 L653.35,186.72 L653.96,188.10 L654.57,189.48 L655.18,190.86 L655.78,192.24 L656.38,193.62 L656.97,195.01 L657.55,196.39 L658.13,197.77 L658.69,199.15 L659.25,200.53 L659.81,201.91 L660.37,203.29 L660.93,204.66 L661.50,206.03 L662.09,207.39 L662.70,208.74 L663.33,210.07 L663.99,211.40 L664.67,212.71 L665.38,214.01 L666.10,215.30 L666.86,216.58 L667.63,217.85 L668.42,219.11 L669.23,220.36 L670.06,221.61 L670.91,222.84 L671.78,224.06 L672.66,225.28 L673.55,226.49 L674.46,227.69 L675.39,228.88 L676.32,230.07 L677.27,231.25 L678.23,232.43 L679.19,233.60 L680.17,234.76 L681.15,235.92 L682.14,237.08 L683.14,238.23 L684.14,239.38 L685.15,240.52 L686.15,241.67 L687.16,242.81 L688.18,243.94 L689.19,245.08 L690.20,246.21 L691.21,247.34 L692.22,248.48 L693.22,249.61 L694.22,250.74 L695.22,251.87 L696.21,253.01 L697.19,254.14 L698.17,255.28 L699.14,256.41 L700.10,257.55 L701.05,258.70 L701.99,259.84 L702.93,260.99 L703.87,262.13 L704.79,263.29 L705.72,264.44 L706.63,265.60 L707.55,266.76 L708.45,267.93 L709.36,269.10 L710.26,270.27 L711.16,271.45 L712.06,272.63 L712.95,273.81 L713.85,275.00 L714.74,276.20 L715.64,277.40 L716.53,278.60 L717.42,279.81 L718.32,281.03 L719.21,282.25 L720.11,283.47 L721.01,284.69 L721.91,285.92 L722.82,287.14 L723.73,288.37 L724.65,289.59 L725.57,290.81 L726.50,292.02 L727.44,293.23 L728.39,294.43 L729.34,295.62 L730.30,296.81 L731.28,297.98 L732.26,299.14 L733.25,300.29 L734.26,301.42 L735.28,302.54 L736.31,303.65 L737.35,304.74 L738.41,305.80 L739.48,306.85 L740.57,307.88 L741.68,308.89 L742.80,309.87 L743.94,310.83 L745.10,311.77 L746.28,312.68 L747.47,313.56 L748.69,314.41 L749.93,315.23 L751.18,316.03 L752.46,316.79 L753.77,317.51 L755.09,318.21 L756.44,318.86 L757.82,319.49 L759.21,320.06 L760.62,320.58 L762.05,321.05 L763.49,321.44 L764.93,321.75 L766.38,321.98 L767.82,322.11 L769.27,322.14 L770.70,322.06 L772.13,321.86 L773.54,321.53 L774.93,321.06 L776.30,320.45 L777.64,319.69 L778.94,318.80 L780.18,317.79 L781.35,316.67 L782.44,315.45 L783.43,314.14 L784.32,312.75 L785.09,311.29 L785.72,309.78 L786.21,308.23 L786.53,306.63" fill="none" stroke="#38a838" stroke-width="1.3" stroke-dasharray="1.4 2"/>
<path d="M80.09,20.22 L80.31,21.76 L80.55,23.28 L80.80,24.80 L81.07,26.31 L81.36,27.81 L81.67,29.30 L81.99,30.78 L82.33,32.25 L82.68,33.71 L83.06,35.16 L83.45,36.61 L83.85,38.05 L84.27,39.47 L84.71,40.90 L85.17,42.31 L85.64,43.72 L86.12,45.12 L86.63,46.51 L87.15,47.90 L87.68,49.28 L88.23,50.65 L88.80,52.02 L89.38,53.38 L89.98,54.74 L90.60,56.09 L91.23,57.43 L91.87,58.77 L92.54,60.11 L93.21,61.44 L93.91,62.77 L94.61,64.09 L95.34,65.41 L96.08,66.73 L96.83,68.04 L97.60,69.35 L98.38,70.66 L99.18,71.96 L100.00,73.26 L100.83,74.56 L101.68,75.84 L102.54,77.12 L103.43,78.38 L104.35,79.62 L105.28,80.83 L106.25,82.02 L107.24,83.17 L108.26,84.28 L109.31,85.35 L110.40,86.38 L111.53,87.35 L112.69,88.28 L113.89,89.14 L115.13,89.94 L116.42,90.68 L117.74,91.35 L119.10,91.95 L120.49,92.49 L121.91,92.96 L123.34,93.36 L124.80,93.70 L126.26,93.98 L127.72,94.20 L129.19,94.35 L130.66,94.44 L132.12,94.47 L133.57,94.44 L135.01,94.35 L136.45,94.20 L137.87,94.00 L139.30,93.75 L140.71,93.45 L142.12,93.10 L143.52,92.71 L144.91,92.27 L146.30,91.78 L147.67,91.26 L149.04,90.69 L150.41,90.09 L151.76,89.46 L153.11,88.79 L154.45,88.09 L155.79,87.35 L157.11,86.59 L158.43,85.81 L159.74,85.00 L161.04,84.17 L162.34,83.31 L163.62,82.44 L164.90,81.55 L166.18,80.65 L167.44,79.73 L168.70,78.80 L169.95,77.86 L171.19,76.92 L172.42,75.97 L173.65,75.01 L174.86,74.05 L176.07,73.10 L177.27,72.14 L178.47,71.19 L179.65,70.24 L180.84,69.30 L182.01,68.36 L183.19,67.43 L184.36,66.51 L185.54,65.60 L186.71,64.70 L187.90,63.81 L189.08,62.94 L190.28,62.07 L191.48,61.22 L192.70,60.39 L193.92,59.57 L195.16,58.77 L196.42,57.98 L197.69,57.22 L198.98,56.47 L200.29,55.74 L201.62,55.04 L202.97,54.37 L204.34,53.74 L205.72,53.16 L207.11,52.62 L208.51,52.15 L209.92,51.74 L211.34,51.39 L212.77,51.13 L214.20,50.95 L215.63,50.86 L217.07,50.85 L218.51,50.92 L219.95,51.06 L221.40,51.26 L222.85,51.51 L224.30,51.82 L225.75,52.16 L227.21,52.54 L228.67,52.94 L230.14,53.37 L231.60,53.80 L233.07,54.24 L234.55,54.68 L236.02,55.10 L237.50,55.51 L238.98,55.90 L240.47,56.26 L241.96,56.59 L243.45,56.91 L244.94,57.20 L246.43,57.48 L247.92,57.76 L249.41,58.02 L250.90,58.28 L252.38,58.55 L253.86,58.82 L255.34,59.09 L256.81,59.38 L258.28,59.69 L259.74,60.01 L261.19,60.35 L262.64,60.72 L264.09,61.10 L265.52,61.50 L266.95,61.91 L268.38,62.35 L269.80,62.80 L271.21,63.27 L272.62,63.75 L274.02,64.26 L275.41,64.78 L276.80,65.31 L278.19,65.86 L279.56,66.43 L280.94,67.01 L282.30,67.60 L283.66,68.21 L285.02,68.84 L286.37,69.48 L287.71,70.13 L289.05,70.79 L290.38,71.47 L291.71,72.16 L293.03,72.87 L294.34,73.58 L295.65,74.31 L296.96,75.05 L298.26,75.80 L299.55,76.56 L300.84,77.34 L302.12,78.12 L303.40,78.91 L304.67,79.71 L305.95,80.52 L307.21,81.33 L308.48,82.16 L309.74,82.98 L310.99,83.81 L312.25,84.65 L313.50,85.49 L314.76,86.33 L316.01,87.17 L317.26,88.02 L318.51,88.87 L319.76,89.71 L321.01,90.56 L322.26,91.40 L323.51,92.24 L324.76,93.08 L326.01,93.91 L327.27,94.74 L328.53,95.57 L329.79,96.39 L331.05,97.20 L332.32,98.00 L333.59,98.80 L334.86,99.59 L336.14,100.37 L337.42,101.14 L338.71,101.90 L340.00,102.64 L341.30,103.38 L342.60,104.10 L343.91,104.80 L345.23,105.50 L346.55,106.18 L347.88,106.84 L349.22,107.48 L350.57,108.12 L351.92,108.74 L353.28,109.35 L354.64,109.95 L356.01,110.56 L357.38,111.15 L358.75,111.75 L360.13,112.36 L361.51,112.96 L362.90,113.58 L364.28,114.20 L365.67,114.84 L367.06,115.49 L368.44,116.16 L369.83,116.83 L371.22,117.52 L372.61,118.21 L374.00,118.90 L375.39,119.57 L376.78,120.24 L378.17,120.89 L379.57,121.52 L380.96,122.12 L382.36,122.69 L383.76,123.22 L385.17,123.70 L386.57,124.15 L387.98,124.54 L389.40,124.87 L390.81,125.14 L392.23,125.34 L393.66,125.48 L395.08,125.55 L396.51,125.55 L397.95,125.50 L399.38,125.38 L400.82,125.22 L402.25,125.00 L403.69,124.73 L405.13,124.41 L406.57,124.05 L408.01,123.66 L409.45,123.22 L410.88,122.75 L412.32,122.25 L413.75,121.72 L415.18,121.17 L416.61,120.59 L418.03,120.00 L419.45,119.38 L420.86,118.76 L422.27,118.12 L423.68,117.48 L425.08,116.83 L426.48,116.18 L427.86,115.53 L429.25,114.89 L430.62,114.25 L432.00,113.62 L433.37,112.99 L434.75,112.39 L436.12,111.79 L437.50,111.21 L438.88,110.65 L440.27,110.11 L441.67,109.59 L443.07,109.10 L444.48,108.63 L445.90,108.20 L447.34,107.79 L448.78,107.41 L450.23,107.07 L451.69,106.75 L453.15,106.47 L454.62,106.23 L456.10,106.02 L457.58,105.84 L459.06,105.71 L460.55,105.61 L462.03,105.55 L463.52,105.53 L465.01,105.55 L466.49,105.61 L467.98,105.71 L469.46,105.86 L470.94,106.05 L472.41,106.28 L473.88,106.55 L475.35,106.85 L476.81,107.18 L478.28,107.54 L479.74,107.92 L481.19,108.33 L482.65,108.75 L484.10,109.19 L485.55,109.64 L486.99,110.10 L488.44,110.57 L489.88,111.04 L491.32,111.51 L492.76,111.98 L494.20,112.46 L495.63,112.94 L497.06,113.42 L498.49,113.90 L499.92,114.39 L501.35,114.88 L502.77,115.37 L504.19,115.86 L505.61,116.36 L507.03,116.86 L508.45,117.36 L509.86,117.87 L511.28,118.38 L512.69,118.89 L514.10,119.40 L515.50,119.92 L516.91,120.44 L518.31,120.97 L519.71,121.50 L521.11,122.03 L522.51,122.57 L523.91,123.11 L525.30,123.65 L526.69,124.20 L528.09,124.75 L529.47,125.31 L530.86,125.87 L532.25,126.43 L533.63,127.00 L535.01,127.58 L536.39,128.16 L537.77,128.75 L539.14,129.34 L540.51,129.94 L541.87,130.55 L543.24,131.17 L544.60,131.79 L545.95,132.42 L547.30,133.06 L548.65,133.70 L550.00,134.36 L551.34,135.02 L552.67,135.70 L554.00,136.38 L555.33,137.08 L556.65,137.78 L557.96,138.50 L559.27,139.22 L560.58,139.96 L561.88,140.71 L563.17,141.47 L564.46,142.24 L565.74,143.03 L567.02,143.83 L568.28,144.64 L569.55,145.47 L570.80,146.31 L572.05,147.16 L573.29,148.03 L574.52,148.91 L575.74,149.80 L576.96,150.70 L578.16,151.62 L579.36,152.55 L580.54,153.49 L581.72,154.45 L582.88,155.42 L584.03,156.40 L585.18,157.39 L586.31,158.40 L587.43,159.42 L588.53,160.45 L589.63,161.49 L590.71,162.55 L591.77,163.62 L592.83,164.70 L593.87,165.79 L594.89,166.89 L595.90,168.01 L596.90,169.14 L597.87,170.28 L598.84,171.43 L599.79,172.59 L600.72,173.77 L601.63,174.96 L602.53,176.16 L603.41,177.37 L604.27,178.59 L605.11,179.83 L605.93,181.07 L606.74,182.33 L607.53,183.60 L608.29,184.87 L609.04,186.16 L609.78,187.46 L610.50,188.77 L611.20,190.09 L611.88,191.42 L612.55,192.75 L613.21,194.10 L613.86,195.45 L614.49,196.81 L615.11,198.17 L615.72,199.54 L616.32,200.92 L616.91,202.31 L617.49,203.70 L618.06,205.09 L618.62,206.49 L619.18,207.90 L619.73,209.30 L620.27,210.71 L620.81,212.13 L621.34,213.54 L621.87,214.96 L622.40,216.38 L622.92,217.81 L623.45,219.23 L623.97,220.65 L624.49,222.08 L625.01,223.50 L625.53,224.93 L626.05,226.35 L626.57,227.77 L627.10,229.19 L627.63,230.61 L628.16,232.03 L628.70,233.44 L629.24,234.85 L629.79,236.26 L630.34,237.66 L630.90,239.06 L631.47,240.45 L632.05,241.84 L632.64,243.22 L633.23,244.60 L633.84,245.97 L634.46,247.34 L635.09,248.70 L635.73,250.05 L636.38,251.39 L637.05,252.72 L637.73,254.05 L638.43,255.36 L639.14,256.67 L639.87,257.97 L640.62,259.26 L641.38,260.54 L642.15,261.81 L642.94,263.07 L643.74,264.33 L644.55,265.57 L645.37,266.82 L646.20,268.05 L647.04,269.28 L647.89,270.51 L648.75,271.73 L649.62,272.95 L650.49,274.16 L651.37,275.38 L652.25,276.59 L653.13,277.79 L654.02,279.00 L654.91,280.20 L655.81,281.41 L656.70,282.61 L657.59,283.82 L658.49,285.03 L659.38,286.23 L660.27,287.44 L661.16,288.66 L662.04,289.87 L662.92,291.09 L663.81,292.30 L664.68,293.52 L665.56,294.74 L666.44,295.97 L667.31,297.19 L668.18,298.42 L669.05,299.65 L669.91,300.88 L670.78,302.11 L671.64,303.34 L672.50,304.58 L673.35,305.82 L674.21,307.06 L675.06,308.30 L675.91,309.54 L676.75,310.79 L677.60,312.03 L678.44,313.28 L679.28,314.53 L680.12,315.78 L680.95,317.03 L681.78,318.29 L682.61,319.55 L683.43,320.80 L684.26,322.06 L685.08,323.33 L685.89,324.59 L686.71,325.85 L687.52,327.12 L688.33,328.39 L689.13,329.66 L689.93,330.93 L690.73,332.20 L691.53,333.48 L692.32,334.75 L693.11,336.03 L693.90,337.31 L694.68,338.59 L695.47,339.87 L696.24,341.15 L697.02,342.44 L697.79,343.73 L698.56,345.01 L699.32,346.30 L700.09,347.59 L700.85,348.88 L701.60,350.18 L702.36,351.47 L703.12,352.76 L703.87,354.05 L704.63,355.35 L705.38,356.64 L706.14,357.93 L706.89,359.22 L707.65,360.51 L708.41,361.80 L709.17,363.09 L709.93,364.37 L710.69,365.66 L711.46,366.94 L712.23,368.22 L713.00,369.50 L713.77,370.77 L714.55,372.04 L715.34,373.31 L716.13,374.58 L716.92,375.84 L717.72,377.10 L718.52,378.36 L719.33,379.61 L720.15,380.86 L720.97,382.10 L721.80,383.34 L722.64,384.57 L723.49,385.80 L724.34,387.02 L725.20,388.24 L726.07,389.45 L726.95,390.66 L727.84,391.86 L728.74,393.06 L729.65,394.25 L730.57,395.43 L731.50,396.60 L732.44,397.77 L733.40,398.93 L734.36,400.09 L735.34,401.23 L736.33,402.37 L737.33,403.50 L738.35,404.62 L739.37,405.74 L740.42,406.84 L741.47,407.94 L742.54,409.02 L743.63,410.10 L744.73,411.17 L745.85,412.23 L746.98,413.28 L748.13,414.32 L749.30,415.35 L750.48,416.37 L751.68,417.38 L752.90,418.37 L754.13,419.34 L755.37,420.29 L756.63,421.21 L757.91,422.10 L759.20,422.95 L760.50,423.76 L761.81,424.53 L763.13,425.25 L764.47,425.92 L765.81,426.53 L767.17,427.08 L768.53,427.57 L769.90,427.99 L771.27,428.33 L772.66,428.60 L774.05,428.79 L775.44,428.89 L776.84,428.90 L778.24,428.82 L779.65,428.64 L781.06,428.36 L782.47,427.98 L783.89,427.49 L785.30,426.88 L786.71,426.15" fill="none" stroke="#12e4ee" stroke-width="2.2"/>
<path d="M79.71,425.20 L80.46,426.68 L81.31,428.06 L82.24,429.34 L83.26,430.52 L84.36,431.60 L85.52,432.58 L86.75,433.47 L88.03,434.25 L89.36,434.94 L90.73,435.53 L92.14,436.02 L93.58,436.42 L95.03,436.72 L96.50,436.92 L97.98,437.03 L99.45,437.05 L100.92,436.97 L102.38,436.79 L103.82,436.52 L105.25,436.18 L106.65,435.75 L108.05,435.25 L109.43,434.69 L110.79,434.07 L112.14,433.40 L113.47,432.68 L114.78,431.92 L116.09,431.12 L117.37,430.30 L118.64,429.46 L119.90,428.60 L121.14,427.72 L122.36,426.83 L123.57,425.92 L124.76,425.00 L125.95,424.07 L127.11,423.12 L128.26,422.16 L129.40,421.18 L130.53,420.20 L131.64,419.19 L132.74,418.18 L133.82,417.15 L134.89,416.11 L135.95,415.06 L137.00,414.00 L138.03,412.92 L139.05,411.84 L140.06,410.74 L141.06,409.63 L142.05,408.52 L143.02,407.39 L143.98,406.25 L144.94,405.10 L145.88,403.94 L146.81,402.78 L147.73,401.60 L148.64,400.41 L149.54,399.22 L150.43,398.02 L151.31,396.81 L152.18,395.59 L153.04,394.37 L153.89,393.13 L154.73,391.89 L155.57,390.65 L156.39,389.39 L157.21,388.13 L158.02,386.87 L158.82,385.60 L159.61,384.32 L160.40,383.04 L161.18,381.75 L161.95,380.46 L162.71,379.16 L163.47,377.86 L164.22,376.55 L164.97,375.24 L165.71,373.93 L166.45,372.61 L167.18,371.29 L167.91,369.97 L168.63,368.64 L169.35,367.31 L170.06,365.98 L170.77,364.64 L171.48,363.31 L172.19,361.97 L172.89,360.63 L173.59,359.29 L174.29,357.94 L174.98,356.60 L175.68,355.26 L176.37,353.91 L177.07,352.57 L177.76,351.22 L178.45,349.88 L179.15,348.53 L179.84,347.19 L180.53,345.84 L181.23,344.50 L181.93,343.16 L182.62,341.82 L183.32,340.48 L184.02,339.15 L184.73,337.81 L185.44,336.48 L186.15,335.15 L186.86,333.83 L187.58,332.50 L188.30,331.18 L189.02,329.87 L189.75,328.55 L190.48,327.24 L191.22,325.94 L191.97,324.64 L192.72,323.34 L193.47,322.05 L194.23,320.77 L195.00,319.49 L195.78,318.21 L196.56,316.94 L197.35,315.68 L198.15,314.42 L198.95,313.17 L199.77,311.92 L200.59,310.69 L201.42,309.45 L202.26,308.23 L203.11,307.01 L203.97,305.81 L204.83,304.61 L205.71,303.41 L206.60,302.23 L207.50,301.05 L208.42,299.89 L209.34,298.73 L210.27,297.58 L211.22,296.44 L212.18,295.31 L213.15,294.19 L214.14,293.08 L215.13,291.98 L216.14,290.89 L217.17,289.81 L218.20,288.74 L219.25,287.68 L220.30,286.62 L221.37,285.58 L222.44,284.53 L223.52,283.50 L224.61,282.47 L225.70,281.44 L226.80,280.42 L227.91,279.40 L229.02,278.38 L230.13,277.36 L231.24,276.35 L232.36,275.34 L233.48,274.32 L234.59,273.31 L235.71,272.29 L236.83,271.28 L237.94,270.26 L239.05,269.23 L240.16,268.21 L241.26,267.17 L242.36,266.14 L243.46,265.09 L244.54,264.05 L245.63,262.99 L246.70,261.93 L247.78,260.87 L248.85,259.81 L249.92,258.74 L250.98,257.67 L252.05,256.61 L253.11,255.54 L254.18,254.47 L255.25,253.41 L256.31,252.35 L257.38,251.29 L258.46,250.24 L259.53,249.20 L260.62,248.16 L261.70,247.12 L262.80,246.10 L263.90,245.08 L265.00,244.08 L266.12,243.08 L267.24,242.10 L268.37,241.12 L269.51,240.16 L270.67,239.22 L271.83,238.29 L273.01,237.37 L274.19,236.47 L275.39,235.58 L276.60,234.71 L277.82,233.84 L279.04,233.00 L280.28,232.16 L281.52,231.34 L282.78,230.53 L284.04,229.73 L285.31,228.95 L286.59,228.18 L287.88,227.42 L289.17,226.67 L290.48,225.94 L291.79,225.21 L293.10,224.50 L294.43,223.80 L295.76,223.11 L297.09,222.43 L298.43,221.76 L299.78,221.11 L301.13,220.46 L302.49,219.82 L303.85,219.20 L305.22,218.58 L306.59,217.97 L307.96,217.38 L309.34,216.79 L310.72,216.21 L312.11,215.63 L313.49,215.06 L314.88,214.50 L316.27,213.93 L317.66,213.38 L319.05,212.82 L320.44,212.26 L321.83,211.70 L323.22,211.14 L324.61,210.58 L325.99,210.01 L327.38,209.44 L328.76,208.86 L330.13,208.27 L331.51,207.68 L332.88,207.08 L334.24,206.47 L335.60,205.84 L336.96,205.21 L338.31,204.56 L339.65,203.89 L340.99,203.22 L342.32,202.53 L343.64,201.83 L344.97,201.12 L346.29,200.40 L347.60,199.68 L348.91,198.94 L350.22,198.21 L351.53,197.47 L352.84,196.72 L354.15,195.98 L355.45,195.23 L356.76,194.49 L358.07,193.74 L359.38,193.00 L360.69,192.27 L362.01,191.54 L363.33,190.82 L364.65,190.10 L365.97,189.39 L367.30,188.69 L368.63,188.00 L369.96,187.30 L371.29,186.61 L372.62,185.92 L373.94,185.22 L375.26,184.52 L376.58,183.81 L377.89,183.09 L379.19,182.37 L380.48,181.63 L381.77,180.89 L383.04,180.12 L384.30,179.34 L385.55,178.54 L386.79,177.73 L388.01,176.89 L389.22,176.02 L390.41,175.14 L391.58,174.22 L392.73,173.29 L393.87,172.33 L395.00,171.35 L396.11,170.35 L397.20,169.32 L398.28,168.28 L399.35,167.22 L400.40,166.15 L401.44,165.05 L402.46,163.94 L403.47,162.82 L404.47,161.68 L405.46,160.53 L406.43,159.37 L407.40,158.19 L408.35,157.01 L409.29,155.81 L410.22,154.61 L411.14,153.40 L412.05,152.18 L412.96,150.96 L413.85,149.73 L414.73,148.50 L415.61,147.26 L416.48,146.02 L417.34,144.78 L418.19,143.54 L419.03,142.30 L419.87,141.05 L420.70,139.80 L421.53,138.55 L422.35,137.30 L423.16,136.05 L423.98,134.80 L424.78,133.54 L425.58,132.29 L426.38,131.03 L427.17,129.77 L427.96,128.51 L428.75,127.25 L429.54,125.99 L430.32,124.72 L431.10,123.46 L431.88,122.19 L432.66,120.92 L433.44,119.66 L434.22,118.39 L435.00,117.12 L435.77,115.84 L436.55,114.57 L437.33,113.30 L438.11,112.03 L438.90,110.76 L439.68,109.48 L440.48,108.22 L441.27,106.95 L442.07,105.68 L442.87,104.42 L443.68,103.16 L444.50,101.91 L445.32,100.66 L446.15,99.41 L446.98,98.17 L447.83,96.94 L448.68,95.71 L449.54,94.49 L450.42,93.27 L451.30,92.06 L452.19,90.86 L453.10,89.67 L454.02,88.49 L454.95,87.32 L455.89,86.16 L456.85,85.01 L457.82,83.86 L458.80,82.73 L459.80,81.62 L460.82,80.51 L461.85,79.42 L462.90,78.33 L463.95,77.26 L465.03,76.20 L466.11,75.16 L467.21,74.12 L468.32,73.09 L469.43,72.08 L470.56,71.08 L471.70,70.08 L472.85,69.10 L474.01,68.13 L475.17,67.17 L476.35,66.22 L477.53,65.28 L478.71,64.35 L479.91,63.43 L481.11,62.52 L482.31,61.62 L483.52,60.72 L484.73,59.84 L485.95,58.97 L487.18,58.10 L488.41,57.25 L489.64,56.40 L490.88,55.56 L492.13,54.73 L493.38,53.91 L494.63,53.09 L495.89,52.29 L497.15,51.49 L498.42,50.70 L499.69,49.91 L500.97,49.13 L502.25,48.36 L503.53,47.59 L504.82,46.84 L506.11,46.08 L507.41,45.34 L508.71,44.59 L510.01,43.86 L511.31,43.13 L512.62,42.40 L513.93,41.69 L515.25,40.97 L516.57,40.26 L517.89,39.56 L519.21,38.85 L520.54,38.16 L521.87,37.46 L523.20,36.78 L524.54,36.09 L525.88,35.41 L527.22,34.73 L528.56,34.05 L529.90,33.38 L531.25,32.71 L532.60,32.05 L533.95,31.39 L535.31,30.75 L536.67,30.11 L538.03,29.47 L539.40,28.85 L540.77,28.24 L542.15,27.65 L543.53,27.06 L544.92,26.49 L546.31,25.94 L547.71,25.40 L549.11,24.88 L550.52,24.37 L551.94,23.89 L553.36,23.43 L554.79,22.98 L556.23,22.56 L557.68,22.16 L559.13,21.79 L560.59,21.44 L562.06,21.12 L563.54,20.82 L565.03,20.55 L566.52,20.31 L568.03,20.10 L569.54,19.92 L571.06,19.78 L572.58,19.67 L574.10,19.61 L575.62,19.58 L577.14,19.60 L578.65,19.67 L580.15,19.79 L581.63,19.96 L583.11,20.18 L584.56,20.47 L585.99,20.81 L587.41,21.22 L588.79,21.69 L590.15,22.24 L591.48,22.85 L592.78,23.53 L594.05,24.27 L595.29,25.07 L596.50,25.93 L597.67,26.84 L598.82,27.80 L599.94,28.80 L601.03,29.85 L602.08,30.94 L603.11,32.06 L604.10,33.21 L605.07,34.38 L606.00,35.58 L606.90,36.81 L607.78,38.04 L608.62,39.30 L609.43,40.57 L610.22,41.85 L610.98,43.14 L611.72,44.45 L612.43,45.78 L613.12,47.11 L613.79,48.45 L614.44,49.80 L615.08,51.17 L615.69,52.54 L616.29,53.92 L616.87,55.30 L617.45,56.69 L618.00,58.09 L618.55,59.50 L619.09,60.90 L619.62,62.31 L620.14,63.73 L620.66,65.14 L621.17,66.56 L621.68,67.98 L622.18,69.40 L622.68,70.82 L623.17,72.24 L623.67,73.66 L624.16,75.08 L624.65,76.51 L625.14,77.93 L625.63,79.35 L626.12,80.77 L626.61,82.19 L627.11,83.61 L627.60,85.03 L628.10,86.45 L628.60,87.87 L629.10,89.28 L629.61,90.70 L630.12,92.11 L630.64,93.52 L631.16,94.92 L631.69,96.32 L632.23,97.73 L632.77,99.12 L633.32,100.52 L633.88,101.91 L634.45,103.29 L635.02,104.68 L635.61,106.05 L636.20,107.43 L636.80,108.80 L637.42,110.16 L638.04,111.52 L638.67,112.87 L639.32,114.21 L639.98,115.55 L640.65,116.88 L641.33,118.21 L642.02,119.53 L642.73,120.84 L643.45,122.14 L644.18,123.43 L644.93,124.72 L645.69,126.00 L646.47,127.27 L647.26,128.53 L648.06,129.78 L648.89,131.02 L649.72,132.25 L650.58,133.47 L651.45,134.68 L652.34,135.87 L653.24,137.06 L654.17,138.24 L655.11,139.40 L656.07,140.55 L657.05,141.70 L658.05,142.82 L659.07,143.94 L660.10,145.04 L661.15,146.13 L662.22,147.22 L663.29,148.30 L664.37,149.37 L665.45,150.45 L666.54,151.52 L667.62,152.59 L668.70,153.66 L669.77,154.74 L670.84,155.82 L671.89,156.91 L672.93,158.01 L673.95,159.12 L674.95,160.24 L675.92,161.37 L676.88,162.53 L677.80,163.69 L678.69,164.88 L679.56,166.09 L680.39,167.32 L681.19,168.57 L681.96,169.83 L682.71,171.11 L683.43,172.41 L684.13,173.72 L684.81,175.04 L685.47,176.38 L686.10,177.73 L686.72,179.09 L687.32,180.46 L687.91,181.85 L688.48,183.24 L689.04,184.64 L689.59,186.04 L690.12,187.46 L690.65,188.88 L691.17,190.30 L691.69,191.73 L692.20,193.16 L692.70,194.59 L693.21,196.02 L693.71,197.46 L694.22,198.89 L694.72,200.33 L695.23,201.76 L695.75,203.19 L696.27,204.61 L696.80,206.03 L697.33,207.45 L697.88,208.86 L698.44,210.26 L699.01,211.65 L699.59,213.04 L700.19,214.42 L700.80,215.79 L701.42,217.15 L702.05,218.51 L702.69,219.86 L703.34,221.20 L704.01,222.54 L704.68,223.87 L705.37,225.20 L706.06,226.52 L706.77,227.83 L707.49,229.14 L708.21,230.44 L708.95,231.73 L709.69,233.03 L710.44,234.31 L711.21,235.60 L711.98,236.87 L712.75,238.15 L713.54,239.41 L714.33,240.68 L715.14,241.94 L715.95,243.20 L716.76,244.45 L717.58,245.70 L718.41,246.95 L719.25,248.19 L720.10,249.43 L720.95,250.66 L721.81,251.89 L722.68,253.12 L723.55,254.33 L724.44,255.55 L725.33,256.75 L726.24,257.95 L727.15,259.14 L728.07,260.33 L729.01,261.50 L729.95,262.67 L730.91,263.83 L731.87,264.98 L732.85,266.13 L733.83,267.26 L734.83,268.38 L735.85,269.49 L736.87,270.59 L737.91,271.68 L738.96,272.76 L740.02,273.83 L741.09,274.88 L742.18,275.92 L743.29,276.95 L744.40,277.97 L745.53,278.97 L746.68,279.95 L747.84,280.93 L749.02,281.89 L750.21,282.83 L751.42,283.76 L752.64,284.67 L753.88,285.56 L755.14,286.44 L756.41,287.30 L757.70,288.15 L759.01,288.96 L760.33,289.74 L761.66,290.48 L763.00,291.15 L764.35,291.77 L765.71,292.31 L767.07,292.76 L768.43,293.13 L769.80,293.39 L771.17,293.54 L772.54,293.57 L773.90,293.47 L775.25,293.25 L776.57,292.88 L777.86,292.39 L779.11,291.75 L780.32,290.96 L781.46,290.03 L782.54,288.95 L783.54,287.71 L784.46,286.32 L785.29,284.77 L786.02,283.05 L786.64,281.16" fill="none" stroke="#1ee81e" stroke-width="2.2"/>
<rect x="579" y="19.7" width="2" height="427" fill="#f4f400"/>
<g stroke="#d8d8d8" stroke-width="1" fill="none"><line x1="151.8" y1="105.1" x2="156.8" y2="105.1"/><line x1="159.8" y1="105.1" x2="164.8" y2="105.1"/><line x1="158.3" y1="98.6" x2="158.3" y2="103.6"/><line x1="158.3" y1="106.6" x2="158.3" y2="111.6"/><circle cx="158.3" cy="105.1" r="1.5"/></g>
<rect x="866" y="11.5" width="152" height="440.5" fill="#ffffff"/>
<rect x="866" y="11.5" width="152" height="1.2" fill="#303030"/>
<rect x="866" y="11.5" width="1.2" height="440.5" fill="#404040"/>
<rect x="866" y="25" width="152" height="0.8" fill="#909090"/>
<rect x="929.8" y="12.7" width="37" height="12.3" fill="#ffff00"/>
<rect x="979.7" y="12.7" width="36.6" height="12.3" fill="#ffff00"/>
<text transform="translate(966.30,22.40) scale(1.3000,1)" font-size="11" fill="#000" stroke="#000" stroke-width="0.3" text-anchor="end">CAP2</text>
<text transform="translate(1015.70,22.40) scale(1.3000,1)" font-size="11" fill="#000" stroke="#000" stroke-width="0.3" text-anchor="end">SAP5</text>
<text transform="translate(869.70,35.90) scale(1.3000,1)" font-size="11" fill="#101010" stroke="#101010" stroke-width="0.3" text-anchor="start">Time</text>
<rect x="937.2708593749999" y="25.9" width="29.029140625" height="13.3" fill="#ffffff"/>
<text transform="translate(966.30,35.90) scale(1.3000,1)" font-size="11" fill="#101010" stroke="#101010" stroke-width="0.3" text-anchor="end">4.50</text>
<rect x="986.670859375" y="25.9" width="29.029140625" height="13.3" fill="#ffffff"/>
<text transform="translate(1015.70,35.90) scale(1.3000,1)" font-size="11" fill="#101010" stroke="#101010" stroke-width="0.3" text-anchor="end">4.42</text>
<text transform="translate(869.70,49.64) scale(1.3000,1)" font-size="11" fill="#101010" stroke="#101010" stroke-width="0.3" text-anchor="start">Hubrpm</text>
<rect x="921.3665781249999" y="39.64" width="44.933421875" height="13.3" fill="#ffffff"/>
<text transform="translate(966.30,49.64) scale(1.3000,1)" font-size="11" fill="#101010" stroke="#101010" stroke-width="0.3" text-anchor="end">967.33</text>
<rect x="970.766578125" y="39.64" width="44.933421875" height="13.3" fill="#ffffff"/>
<text transform="translate(1015.70,49.64) scale(1.3000,1)" font-size="11" fill="#101010" stroke="#101010" stroke-width="0.3" text-anchor="end">967.33</text>
<text transform="translate(869.70,63.38) scale(1.3000,1)" font-size="11" fill="#101010" stroke="#101010" stroke-width="0.3" text-anchor="start">EngRPM</text>
<rect x="933.2914374999999" y="53.379999999999995" width="33.008562500000004" height="13.3" fill="#ffffff"/>
<text transform="translate(966.30,63.38) scale(1.3000,1)" font-size="11" fill="#101010" stroke="#101010" stroke-width="0.3" text-anchor="end">5330</text>
<rect x="982.6914375" y="53.379999999999995" width="33.008562500000004" height="13.3" fill="#ffffff"/>
<text transform="translate(1015.70,63.38) scale(1.3000,1)" font-size="11" fill="#101010" stroke="#101010" stroke-width="0.3" text-anchor="end">5330</text>
<text transform="translate(869.70,77.12) scale(1.3000,1)" font-size="11" fill="#101010" stroke="#101010" stroke-width="0.3" text-anchor="start">AxleTorque</text>
<rect x="921.3665781249999" y="67.12" width="44.933421875" height="13.3" fill="#ffffff"/>
<text transform="translate(966.30,77.12) scale(1.3000,1)" font-size="11" fill="#101010" stroke="#101010" stroke-width="0.3" text-anchor="end">1384.3</text>
<rect x="970.766578125" y="67.12" width="44.933421875" height="13.3" fill="#ffffff"/>
<text transform="translate(1015.70,77.12) scale(1.3000,1)" font-size="11" fill="#101010" stroke="#101010" stroke-width="0.3" text-anchor="end">1288.8</text>
<text transform="translate(869.70,90.86) scale(1.3000,1)" font-size="11" fill="#101010" stroke="#101010" stroke-width="0.3" text-anchor="start">AxleTorque</text>
<rect x="921.3665781249999" y="80.86" width="44.933421875" height="13.3" fill="#ffffff"/>
<text transform="translate(966.30,90.86) scale(1.3000,1)" font-size="11" fill="#101010" stroke="#101010" stroke-width="0.3" text-anchor="end">1384.3</text>
<rect x="970.766578125" y="80.86" width="44.933421875" height="13.3" fill="#ffffff"/>
<text transform="translate(1015.70,90.86) scale(1.3000,1)" font-size="11" fill="#101010" stroke="#101010" stroke-width="0.3" text-anchor="end">1288.8</text>
<text transform="translate(869.70,104.60) scale(1.3000,1)" font-size="11" fill="#101010" stroke="#101010" stroke-width="0.3" text-anchor="start">AxleTorqS</text>
<rect x="945.223" y="94.6" width="21.076999999999998" height="13.3" fill="#ffffff"/>
<text transform="translate(966.30,104.60) scale(1.3000,1)" font-size="11" fill="#101010" stroke="#101010" stroke-width="0.3" text-anchor="end">0.0</text>
<rect x="994.623" y="94.6" width="21.076999999999998" height="13.3" fill="#ffffff"/>
<text transform="translate(1015.70,104.60) scale(1.3000,1)" font-size="11" fill="#101010" stroke="#101010" stroke-width="0.3" text-anchor="end">0.0</text>
<rect x="867.2" y="108.34" width="48.720015625" height="13.3" fill="#00e8f0"/>
<text transform="translate(869.70,118.34) scale(1.3000,1)" font-size="11" fill="#101010" stroke="#101010" stroke-width="0.3" text-anchor="start">Torque</text>
<rect x="926.51871875" y="108.34" width="39.78128125" height="13.3" fill="#00e8f0"/>
<text transform="translate(966.30,118.34) scale(1.3000,1)" font-size="11" fill="#101010" stroke="#101010" stroke-width="0.3" text-anchor="end">251.2</text>
<rect x="975.91871875" y="108.34" width="39.78128125" height="13.3" fill="#00e8f0"/>
<text transform="translate(1015.70,118.34) scale(1.3000,1)" font-size="11" fill="#101010" stroke="#101010" stroke-width="0.3" text-anchor="end">233.9</text>
<text transform="translate(869.70,132.08) scale(1.3000,1)" font-size="11" fill="#101010" stroke="#101010" stroke-width="0.3" text-anchor="start">AxlePow</text>
<rect x="929.3187187499999" y="122.08000000000001" width="36.98128125" height="13.3" fill="#ffffff"/>
<text transform="translate(966.30,132.08) scale(1.3000,1)" font-size="11" fill="#101010" stroke="#101010" stroke-width="0.3" text-anchor="end">255.0</text>
<rect x="978.71871875" y="122.08000000000001" width="36.98128125" height="13.3" fill="#ffffff"/>
<text transform="translate(1015.70,132.08) scale(1.3000,1)" font-size="11" fill="#101010" stroke="#101010" stroke-width="0.3" text-anchor="end">237.4</text>
<rect x="867.2" y="135.82" width="45.5315625" height="13.3" fill="#00e800"/>
<text transform="translate(869.70,145.82) scale(1.3000,1)" font-size="11" fill="#101010" stroke="#101010" stroke-width="0.3" text-anchor="start">Power</text>
<rect x="926.51871875" y="135.82" width="39.78128125" height="13.3" fill="#00e800"/>
<text transform="translate(966.30,145.82) scale(1.3000,1)" font-size="11" fill="#101010" stroke="#101010" stroke-width="0.3" text-anchor="end">255.0</text>
<rect x="975.91871875" y="135.82" width="39.78128125" height="13.3" fill="#00e800"/>
<text transform="translate(1015.70,145.82) scale(1.3000,1)" font-size="11" fill="#101010" stroke="#101010" stroke-width="0.3" text-anchor="end">237.4</text>
<text transform="translate(869.70,159.56) scale(1.3000,1)" font-size="11" fill="#101010" stroke="#101010" stroke-width="0.3" text-anchor="start">PCRatio</text>
<rect x="913.4144374999998" y="149.56" width="52.885562500000006" height="13.3" fill="#ffffff"/>
<text transform="translate(966.30,159.56) scale(1.3000,1)" font-size="11" fill="#101010" stroke="#101010" stroke-width="0.3" text-anchor="end">1.00000</text>
<rect x="962.8144374999999" y="149.56" width="52.885562500000006" height="13.3" fill="#ffffff"/>
<text transform="translate(1015.70,159.56) scale(1.3000,1)" font-size="11" fill="#101010" stroke="#101010" stroke-width="0.3" text-anchor="end">1.00000</text>
<text transform="translate(869.70,173.30) scale(1.3000,1)" font-size="11" fill="#101010" stroke="#101010" stroke-width="0.3" text-anchor="start">MAP</text>
<rect x="929.3187187499999" y="163.3" width="36.98128125" height="13.3" fill="#ffffff"/>
<text transform="translate(966.30,173.30) scale(1.3000,1)" font-size="11" fill="#101010" stroke="#101010" stroke-width="0.3" text-anchor="end">18.81</text>
<rect x="978.71871875" y="163.3" width="36.98128125" height="13.3" fill="#ffffff"/>
<text transform="translate(1015.70,173.30) scale(1.3000,1)" font-size="11" fill="#101010" stroke="#101010" stroke-width="0.3" text-anchor="end">18.16</text>
<text transform="translate(869.70,187.04) scale(1.3000,1)" font-size="11" fill="#101010" stroke="#101010" stroke-width="0.3" text-anchor="start">Temp</text>
<rect x="929.3187187499999" y="177.04000000000002" width="36.98128125" height="13.3" fill="#ffffff"/>
<text transform="translate(966.30,187.04) scale(1.3000,1)" font-size="11" fill="#101010" stroke="#101010" stroke-width="0.3" text-anchor="end">212.3</text>
<rect x="978.71871875" y="177.04000000000002" width="36.98128125" height="13.3" fill="#ffffff"/>
<text transform="translate(1015.70,187.04) scale(1.3000,1)" font-size="11" fill="#101010" stroke="#101010" stroke-width="0.3" text-anchor="end">212.3</text>
<text transform="translate(869.70,200.78) scale(1.3000,1)" font-size="11" fill="#101010" stroke="#101010" stroke-width="0.3" text-anchor="start">AirDens</text>
<rect x="921.3665781249999" y="190.78" width="44.933421875" height="13.3" fill="#ffffff"/>
<text transform="translate(966.30,200.78) scale(1.3000,1)" font-size="11" fill="#101010" stroke="#101010" stroke-width="0.3" text-anchor="end">0.4418</text>
<rect x="970.766578125" y="190.78" width="44.933421875" height="13.3" fill="#ffffff"/>
<text transform="translate(1015.70,200.78) scale(1.3000,1)" font-size="11" fill="#101010" stroke="#101010" stroke-width="0.3" text-anchor="end">0.4057</text>
<text transform="translate(869.70,214.52) scale(1.3000,1)" font-size="11" fill="#101010" stroke="#101010" stroke-width="0.3" text-anchor="start">Baro</text>
<rect x="937.2708593749999" y="204.52" width="29.029140625" height="13.3" fill="#ffffff"/>
<text transform="translate(966.30,214.52) scale(1.3000,1)" font-size="11" fill="#101010" stroke="#101010" stroke-width="0.3" text-anchor="end">29.7</text>
<rect x="986.670859375" y="204.52" width="29.029140625" height="13.3" fill="#ffffff"/>
<text transform="translate(1015.70,214.52) scale(1.3000,1)" font-size="11" fill="#101010" stroke="#101010" stroke-width="0.3" text-anchor="end">29.7</text>
<text transform="translate(869.70,228.26) scale(1.3000,1)" font-size="11" fill="#101010" stroke="#101010" stroke-width="0.3" text-anchor="start">RelHum</text>
<rect x="937.2708593749999" y="218.26000000000002" width="29.029140625" height="13.3" fill="#ffffff"/>
<text transform="translate(966.30,228.26) scale(1.3000,1)" font-size="11" fill="#101010" stroke="#101010" stroke-width="0.3" text-anchor="end">51.7</text>
<rect x="986.670859375" y="218.26000000000002" width="29.029140625" height="13.3" fill="#ffffff"/>
<text transform="translate(1015.70,228.26) scale(1.3000,1)" font-size="11" fill="#101010" stroke="#101010" stroke-width="0.3" text-anchor="end">55.5</text>
<text transform="translate(869.70,242.00) scale(1.3000,1)" font-size="11" fill="#101010" stroke="#101010" stroke-width="0.3" text-anchor="start">Speed</text>
<rect x="937.2708593749999" y="232.0" width="29.029140625" height="13.3" fill="#ffffff"/>
<text transform="translate(966.30,242.00) scale(1.3000,1)" font-size="11" fill="#101010" stroke="#101010" stroke-width="0.3" text-anchor="end">78.3</text>
<rect x="986.670859375" y="232.0" width="29.029140625" height="13.3" fill="#ffffff"/>
<text transform="translate(1015.70,242.00) scale(1.3000,1)" font-size="11" fill="#101010" stroke="#101010" stroke-width="0.3" text-anchor="end">78.3</text>
<text transform="translate(869.70,255.74) scale(1.3000,1)" font-size="11" fill="#101010" stroke="#101010" stroke-width="0.3" text-anchor="start">T.Effort</text>
<rect x="921.3665781249999" y="245.74" width="44.933421875" height="13.3" fill="#ffffff"/>
<text transform="translate(966.30,255.74) scale(1.3000,1)" font-size="11" fill="#101010" stroke="#101010" stroke-width="0.3" text-anchor="end">1221.4</text>
<rect x="971.82790625" y="245.74" width="43.87209375" height="13.3" fill="#ffffff"/>
<text transform="translate(1015.70,255.74) scale(1.3000,1)" font-size="11" fill="#101010" stroke="#101010" stroke-width="0.3" text-anchor="end">1137.2</text>
<text transform="translate(869.70,269.48) scale(1.3000,1)" font-size="11" fill="#101010" stroke="#101010" stroke-width="0.3" text-anchor="start">Accel</text>
<rect x="921.3665781249999" y="259.48" width="44.933421875" height="13.3" fill="#ffffff"/>
<text transform="translate(966.30,269.48) scale(1.3000,1)" font-size="11" fill="#101010" stroke="#101010" stroke-width="0.3" text-anchor="end">0.3957</text>
<rect x="970.766578125" y="259.48" width="44.933421875" height="13.3" fill="#ffffff"/>
<text transform="translate(1015.70,269.48) scale(1.3000,1)" font-size="11" fill="#101010" stroke="#101010" stroke-width="0.3" text-anchor="end">0.3684</text>
<text transform="translate(869.70,283.22) scale(1.3000,1)" font-size="11" fill="#101010" stroke="#101010" stroke-width="0.3" text-anchor="start">Distance</text>
<rect x="929.3187187499999" y="273.21999999999997" width="36.98128125" height="13.3" fill="#ffffff"/>
<text transform="translate(966.30,283.22) scale(1.3000,1)" font-size="11" fill="#101010" stroke="#101010" stroke-width="0.3" text-anchor="end">372.4</text>
<rect x="978.71871875" y="273.21999999999997" width="36.98128125" height="13.3" fill="#ffffff"/>
<text transform="translate(1015.70,283.22) scale(1.3000,1)" font-size="11" fill="#101010" stroke="#101010" stroke-width="0.3" text-anchor="end">372.4</text>
<rect x="6" y="473.5" width="1012" height="139.5" fill="#c0c0c0"/>
<text transform="translate(19.10,491.20) scale(1.2704,1)" font-size="16" font-weight="bold" fill="#111" stroke="#111" stroke-width="0.3" text-anchor="start">Plot 1 (Solid)</text>
<text transform="translate(209.50,491.20) scale(1.2728,1)" font-size="16" font-weight="bold" fill="#111" stroke="#111" stroke-width="0.3" text-anchor="start">X Axis</text>
<text transform="translate(298.30,491.20) scale(1.2925,1)" font-size="16" font-weight="bold" fill="#111" stroke="#111" stroke-width="0.3" text-anchor="start">Y Axis (Left)</text>
<text transform="translate(457.60,491.20) scale(1.2923,1)" font-size="16" font-weight="bold" fill="#111" stroke="#111" stroke-width="0.3" text-anchor="start">Y Axis (Right)</text>
<text transform="translate(748.30,491.20) scale(1.2763,1)" font-size="16" font-weight="bold" fill="#111" stroke="#111" stroke-width="0.3" text-anchor="start">Plot 2 (Dash)</text>
<text transform="translate(609.70,485.60) scale(1.3740,1)" font-size="11" font-weight="bold" fill="#111" stroke="#111" stroke-width="0.3" text-anchor="start">Show</text>
<text transform="translate(609.70,500.00) scale(1.3887,1)" font-size="11" font-weight="bold" fill="#111" stroke="#111" stroke-width="0.3" text-anchor="start">Ave.</text>
<text transform="translate(655.50,485.60) scale(1.3740,1)" font-size="11" font-weight="bold" fill="#111" stroke="#111" stroke-width="0.3" text-anchor="start">Show</text>
<text transform="translate(655.50,500.00) scale(1.3422,1)" font-size="11" font-weight="bold" fill="#111" stroke="#111" stroke-width="0.3" text-anchor="start">Data</text>
<text transform="translate(695.30,485.60) scale(1.3400,1)" font-size="11" font-weight="bold" fill="#111" stroke="#111" stroke-width="0.3" text-anchor="start">Lock</text>
<text transform="translate(694.80,500.00) scale(1.3782,1)" font-size="11" font-weight="bold" fill="#111" stroke="#111" stroke-width="0.3" text-anchor="start">Cursor</text>
<rect x="17.2" y="500.5" width="14" height="23" fill="#d0d0d0"/>
<rect x="17.2" y="522.5" width="14" height="1" fill="#a0a0a0"/>
<rect x="17.2" y="511.5" width="14" height="1" fill="#b4b4b4"/>
<path d="M18.7,509.5 L24.2,504.5 L29.7,509.5 Z" fill="#101010"/>
<path d="M18.7,515.0 L24.2,520.5 L29.7,515.0 Z" fill="#101010"/>
<rect x="31.6" y="501.3" width="170.4" height="22.2" fill="#ffff00"/>
<rect x="31.6" y="501.3" width="170.4" height="1.5" fill="#404040"/>
<rect x="31.6" y="501.3" width="1.5" height="22.2" fill="#404040"/>
<rect x="31.6" y="522.5" width="170.4" height="1" fill="#e6e6e6"/>
<rect x="201.0" y="501.3" width="1" height="22.2" fill="#e6e6e6"/>
<text transform="translate(33.70,517.60) scale(1.2503,1)" font-size="16" fill="#000" stroke="#000" stroke-width="0.1" text-anchor="start">Comparison AP 2</text>
<rect x="208" y="500.5" width="14" height="23" fill="#d0d0d0"/>
<rect x="208" y="522.5" width="14" height="1" fill="#a0a0a0"/>
<rect x="208" y="511.5" width="14" height="1" fill="#b4b4b4"/>
<path d="M209.5,509.5 L215.0,504.5 L220.5,509.5 Z" fill="#101010"/>
<path d="M209.5,515.0 L215.0,520.5 L220.5,515.0 Z" fill="#101010"/>
<rect x="222.5" y="501.3" width="67.5" height="22.2" fill="#ffff00"/>
<rect x="222.5" y="501.3" width="67.5" height="1.5" fill="#404040"/>
<rect x="222.5" y="501.3" width="1.5" height="22.2" fill="#404040"/>
<rect x="222.5" y="522.5" width="67.5" height="1" fill="#e6e6e6"/>
<rect x="289.0" y="501.3" width="1" height="22.2" fill="#e6e6e6"/>
<svg x="222.5" y="501.3" width="67.5" height="22.2" overflow="hidden">
<text transform="translate(2.50,16.30) scale(1.2700,1)" font-size="16" fill="#000" stroke="#000" stroke-width="0.1" text-anchor="start">Eng rpm</text>
</svg>
<rect x="297" y="500.5" width="14" height="23" fill="#d0d0d0"/>
<rect x="297" y="522.5" width="14" height="1" fill="#a0a0a0"/>
<rect x="297" y="511.5" width="14" height="1" fill="#b4b4b4"/>
<path d="M298.5,509.5 L304.0,504.5 L309.5,509.5 Z" fill="#101010"/>
<path d="M298.5,515.0 L304.0,520.5 L309.5,515.0 Z" fill="#101010"/>
<rect x="310.5" y="501.3" width="138.8" height="22.2" fill="#00f4f4"/>
<rect x="310.5" y="501.3" width="138.8" height="1.5" fill="#404040"/>
<rect x="310.5" y="501.3" width="1.5" height="22.2" fill="#404040"/>
<rect x="310.5" y="522.5" width="138.8" height="1" fill="#e6e6e6"/>
<rect x="448.3" y="501.3" width="1" height="22.2" fill="#e6e6e6"/>
<text transform="translate(312.50,517.60) scale(1.2700,1)" font-size="16" fill="#000" stroke="#000" stroke-width="0.1" text-anchor="start">Torque</text>
<rect x="456" y="500.5" width="14" height="23" fill="#d0d0d0"/>
<rect x="456" y="522.5" width="14" height="1" fill="#a0a0a0"/>
<rect x="456" y="511.5" width="14" height="1" fill="#b4b4b4"/>
<path d="M457.5,509.5 L463.0,504.5 L468.5,509.5 Z" fill="#101010"/>
<path d="M457.5,515.0 L463.0,520.5 L468.5,515.0 Z" fill="#101010"/>
<rect x="470" y="501.3" width="138.7" height="22.2" fill="#00f000"/>
<rect x="470" y="501.3" width="138.7" height="1.5" fill="#404040"/>
<rect x="470" y="501.3" width="1.5" height="22.2" fill="#404040"/>
<rect x="470" y="522.5" width="138.7" height="1" fill="#e6e6e6"/>
<rect x="607.7" y="501.3" width="1" height="22.2" fill="#e6e6e6"/>
<text transform="translate(472.00,517.60) scale(1.2600,1)" font-size="16" fill="#000" stroke="#000" stroke-width="0.1" text-anchor="start">Power</text>
<rect x="620" y="508.75" width="21" height="17.5" fill="#ffffff"/>
<rect x="620" y="508.75" width="21" height="1.5" fill="#404040"/>
<rect x="620" y="508.75" width="1.5" height="17.5" fill="#404040"/>
<rect x="620" y="525.25" width="21" height="1" fill="#e6e6e6"/>
<rect x="640" y="508.75" width="1" height="17.5" fill="#e6e6e6"/>
<rect x="666.9" y="508.75" width="21" height="17.5" fill="#ffffff"/>
<rect x="666.9" y="508.75" width="21" height="1.5" fill="#404040"/>
<rect x="666.9" y="508.75" width="1.5" height="17.5" fill="#404040"/>
<rect x="666.9" y="525.25" width="21" height="1" fill="#e6e6e6"/>
<rect x="686.9" y="508.75" width="1" height="17.5" fill="#e6e6e6"/>
<path d="M670.9,517.25 L675.4,522.75 L683.9,512.25" fill="none" stroke="#111" stroke-width="3.2"/>
<rect x="708.9" y="508.75" width="21" height="17.5" fill="#ffffff"/>
<rect x="708.9" y="508.75" width="21" height="1.5" fill="#404040"/>
<rect x="708.9" y="508.75" width="1.5" height="17.5" fill="#404040"/>
<rect x="708.9" y="525.25" width="21" height="1" fill="#e6e6e6"/>
<rect x="728.9" y="508.75" width="1" height="17.5" fill="#e6e6e6"/>
<path d="M712.9,517.25 L717.4,522.75 L725.9,512.25" fill="none" stroke="#111" stroke-width="3.2"/>
<rect x="747" y="501" width="14" height="23" fill="#d0d0d0"/>
<rect x="747" y="523" width="14" height="1" fill="#a0a0a0"/>
<rect x="747" y="512.0" width="14" height="1" fill="#b4b4b4"/>
<path d="M748.5,510 L754.0,505 L759.5,510 Z" fill="#101010"/>
<path d="M748.5,515.5 L754.0,521 L759.5,515.5 Z" fill="#101010"/>
<rect x="760.8" y="501.3" width="171.2" height="22" fill="#ffff00"/>
<rect x="760.8" y="501.3" width="171.2" height="1.5" fill="#404040"/>
<rect x="760.8" y="501.3" width="1.5" height="22" fill="#404040"/>
<rect x="760.8" y="522.3" width="171.2" height="1" fill="#e6e6e6"/>
<rect x="931.0" y="501.3" width="1" height="22" fill="#e6e6e6"/>
<text transform="translate(763.00,517.60) scale(1.2600,1)" font-size="16" fill="#000" stroke="#000" stroke-width="0.1" text-anchor="start">Source AP 5</text>
<text transform="translate(18.90,549.20) scale(1.2700,1)" font-size="14" font-weight="bold" fill="#111" stroke="#111" stroke-width="0.3" text-anchor="start">Folder:</text>
<text transform="translate(18.90,575.50) scale(1.2700,1)" font-size="14" font-weight="bold" fill="#111" stroke="#111" stroke-width="0.3" text-anchor="start">Run ID:</text>
<text transform="translate(18.90,602.00) scale(1.2700,1)" font-size="14" font-weight="bold" fill="#111" stroke="#111" stroke-width="0.3" text-anchor="start">Date:</text>
<rect x="90.2" y="534.2" width="160.4" height="18.6" fill="#fdfdd0"/>
<rect x="90.2" y="534.2" width="160.4" height="1.5" fill="#404040"/>
<rect x="90.2" y="534.2" width="1.5" height="18.6" fill="#404040"/>
<rect x="90.2" y="551.8000000000001" width="160.4" height="1" fill="#e6e6e6"/>
<rect x="249.60000000000002" y="534.2" width="1" height="18.6" fill="#e6e6e6"/>
<rect x="90.2" y="560.0" width="191.3" height="19.2" fill="#fdfdd0"/>
<rect x="90.2" y="560.0" width="191.3" height="1.5" fill="#404040"/>
<rect x="90.2" y="560.0" width="1.5" height="19.2" fill="#404040"/>
<rect x="90.2" y="578.2" width="191.3" height="1" fill="#e6e6e6"/>
<rect x="280.5" y="560.0" width="1" height="19.2" fill="#e6e6e6"/>
<rect x="90.2" y="587.2" width="191.3" height="18.6" fill="#fdfdd0"/>
<rect x="90.2" y="587.2" width="191.3" height="1.5" fill="#404040"/>
<rect x="90.2" y="587.2" width="1.5" height="18.6" fill="#404040"/>
<rect x="90.2" y="604.8000000000001" width="191.3" height="1" fill="#e6e6e6"/>
<rect x="280.5" y="587.2" width="1" height="18.6" fill="#e6e6e6"/>
<text transform="translate(92.50,547.80) scale(1.2150,1)" font-size="14" fill="#000" stroke="#000" stroke-width="0.1" text-anchor="start">hps_15mustangeco</text>
<text transform="translate(92.50,574.00) scale(1.2150,1)" font-size="14" fill="#000" stroke="#000" stroke-width="0.1" text-anchor="start">5 hps ic pipes</text>
<text transform="translate(92.50,600.50) scale(1.2150,1)" font-size="14" fill="#000" stroke="#000" stroke-width="0.1" text-anchor="start">06-Jan-2017  15:37:50</text>
<text transform="translate(748.30,549.20) scale(1.2700,1)" font-size="14" font-weight="bold" fill="#111" stroke="#111" stroke-width="0.3" text-anchor="start">Folder:</text>
<text transform="translate(748.30,575.50) scale(1.2700,1)" font-size="14" font-weight="bold" fill="#111" stroke="#111" stroke-width="0.3" text-anchor="start">Run ID:</text>
<text transform="translate(748.30,602.00) scale(1.2700,1)" font-size="14" font-weight="bold" fill="#111" stroke="#111" stroke-width="0.3" text-anchor="start">Date:</text>
<rect x="817.1" y="534.2" width="160.9" height="18.6" fill="#fdfdd0"/>
<rect x="817.1" y="534.2" width="160.9" height="1.5" fill="#404040"/>
<rect x="817.1" y="534.2" width="1.5" height="18.6" fill="#404040"/>
<rect x="817.1" y="551.8000000000001" width="160.9" height="1" fill="#e6e6e6"/>
<rect x="977.0" y="534.2" width="1" height="18.6" fill="#e6e6e6"/>
<rect x="817.1" y="560.0" width="192.4" height="19.2" fill="#fdfdd0"/>
<rect x="817.1" y="560.0" width="192.4" height="1.5" fill="#404040"/>
<rect x="817.1" y="560.0" width="1.5" height="19.2" fill="#404040"/>
<rect x="817.1" y="578.2" width="192.4" height="1" fill="#e6e6e6"/>
<rect x="1008.5" y="560.0" width="1" height="19.2" fill="#e6e6e6"/>
<rect x="817.1" y="587.2" width="192.4" height="18.6" fill="#fdfdd0"/>
<rect x="817.1" y="587.2" width="192.4" height="1.5" fill="#404040"/>
<rect x="817.1" y="587.2" width="1.5" height="18.6" fill="#404040"/>
<rect x="817.1" y="604.8000000000001" width="192.4" height="1" fill="#e6e6e6"/>
<rect x="1008.5" y="587.2" width="1" height="18.6" fill="#e6e6e6"/>
<text transform="translate(819.40,547.80) scale(1.2150,1)" font-size="14" fill="#000" stroke="#000" stroke-width="0.1" text-anchor="start">hps_15mustangeco</text>
<text transform="translate(819.40,574.00) scale(1.2150,1)" font-size="14" fill="#000" stroke="#000" stroke-width="0.1" text-anchor="start">3 STOCK</text>
<text transform="translate(819.40,600.50) scale(1.2150,1)" font-size="14" fill="#000" stroke="#000" stroke-width="0.1" text-anchor="start">06-Jan-2017  14:13:53</text>
<rect x="289.6" y="530" width="452" height="80.5" fill="#ffffff"/>
<path d="M331.1,543.8 L355.1,543.8 L348.6,557.9 L368.5,557.9 L375,543.8 L398.4,543.8 L379.7,584.2 L356.25,584.2 L364.1,567.2 L344.2,567.2 L336.3,584.2 L312.3,584.2 Z" fill="#0a0a0a"/>
<path fill-rule="evenodd" d="M399.5,543.9 L460.1,543.9 C465.5,544.5 467.5,550 466.5,555 C465.5,561 461,565.8 454.2,565.8 L422,565.8 L408.8,583.9 L383.9,583.9 Z M424.9,551.2 L437.6,551.2 C440,551.5 440.5,555.5 435.7,558.5 L421,558.5 Z" fill="#0a0a0a"/>
<path d="M489,543.7 L549,543.7 L544.9,553 L506.6,553 L532.5,574.2 Q537.5,581 533.5,589.8 Q527,596.5 513.8,597.3 L307,597.3 Q304,597.3 305.3,594.8 L309,589.5 Q310,588.2 312.5,588.2 L495.2,588.2 L471.4,568 C465,562 466,550 480.7,545.8 Q485,543.7 489,543.7 Z" fill="#ec1c24" stroke="#111" stroke-width="1.1"/>
<text x="557" y="564.8" font-size="25.5" font-weight="bold" font-style="italic" fill="#fff" stroke="#111" stroke-width="3.8" stroke-linejoin="round" paint-order="stroke" textLength="170.5" lengthAdjust="spacingAndGlyphs">PERFORMANCE</text>
<text x="557" y="594.1" font-size="25.5" font-weight="bold" font-style="italic" fill="#fff" stroke="#111" stroke-width="3.8" stroke-linejoin="round" paint-order="stroke" textLength="121.5" lengthAdjust="spacingAndGlyphs">PRODUCTS</text>
</svg></body></html>
